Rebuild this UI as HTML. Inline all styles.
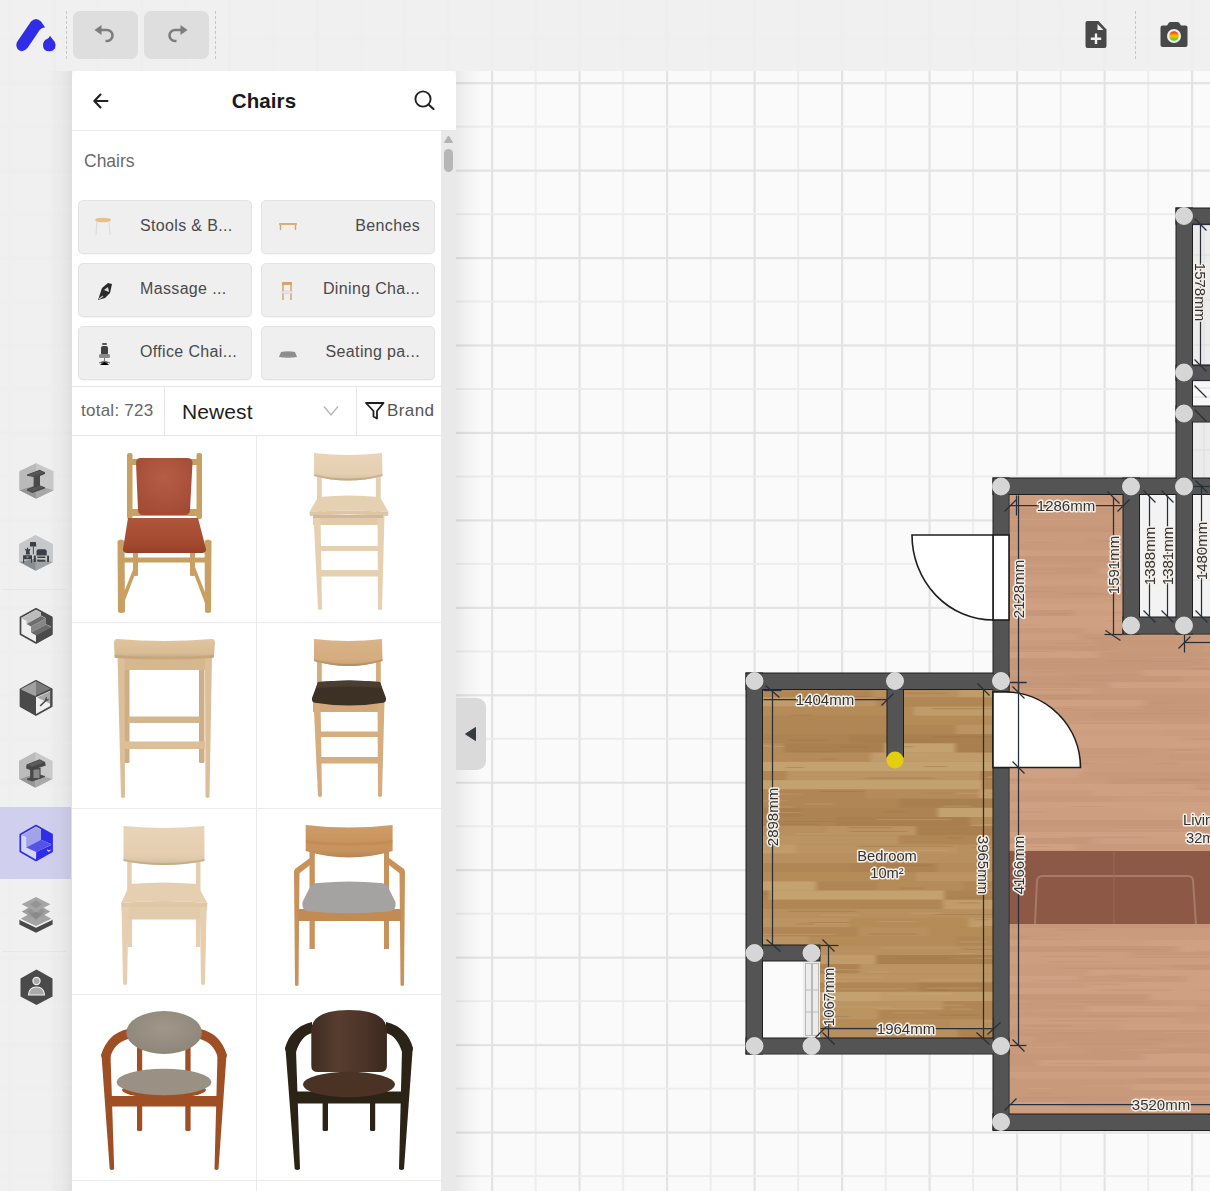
<!DOCTYPE html>
<html><head><meta charset="utf-8">
<style>
html,body{margin:0;padding:0;width:1210px;height:1191px;overflow:hidden;background:#fafafa;font-family:"Liberation Sans",sans-serif;}
.a{position:absolute}
#topbar{position:absolute;left:0;top:0;width:1210px;height:71px;background:rgba(238,238,238,0.88);backdrop-filter:blur(0.8px);}
.sep{position:absolute;top:11px;height:48px;width:0;border-left:1px dashed #c6c6c6;}
.ubtn{position:absolute;top:11px;width:65px;height:48px;background:#dedede;border-radius:7px;}
#sidebar{position:absolute;left:0;top:71px;width:72px;height:1120px;background:rgba(238,238,238,0.88);backdrop-filter:blur(1.5px);}
.sbi{position:absolute;left:0;width:71px;height:72px;}
.sbi svg{position:absolute;left:18px;top:17px;}
#panel{position:absolute;left:72px;top:71px;width:384px;height:1130px;background:#fff;border-radius:7px 7px 0 0;overflow:hidden;}
#hdr{position:absolute;left:0;top:0;width:384px;height:59px;border-bottom:1px solid #e8e8e8;}
#title{position:absolute;left:0;width:384px;top:18px;text-align:center;font-weight:bold;font-size:20.5px;letter-spacing:0.1px;color:#1a1a1a;}
#track{position:absolute;left:369px;top:60px;width:15px;height:1080px;background:#e9e9e9;}
#sub{position:absolute;left:12px;top:80px;font-size:17.5px;color:#6b6b6b;}
.cat{position:absolute;width:172px;height:52px;background:#efefef;border:1px solid #e3e3e3;border-radius:5px;box-shadow:0 1px 1px rgba(0,0,0,0.04);}
.cat .t{position:absolute;right:14px;top:16px;font-size:16px;letter-spacing:0.35px;color:#4a4a4a;white-space:nowrap;}
.cat svg{position:absolute;left:14px;top:15px;}
#sortbar{position:absolute;left:0;top:315px;width:369px;height:48px;border-top:1px solid #e6e6e6;border-bottom:1px solid #e6e6e6;}
.cell{position:absolute;width:184px;height:185px;border-right:1px solid #ebebeb;border-bottom:1px solid #ebebeb;}
.cell svg{position:absolute;left:0;top:0;}
#tab{position:absolute;left:456px;top:698px;width:30px;height:72px;background:#dadada;border-radius:0 9px 9px 0;}
.dim{font-family:"Liberation Sans",sans-serif;font-size:15px;fill:#333;paint-order:stroke;stroke:#f4efe8;stroke-width:3px;stroke-linejoin:round;}
</style></head><body>
<svg class="a" style="left:0;top:0" width="1210" height="1191" viewBox="0 0 1210 1191">
<rect x="9.65" y="0" width="2" height="1191" fill="#ededed"/>
<rect x="53.50" y="0" width="2.2" height="1191" fill="#e3e3e3"/>
<rect x="97.15" y="0" width="2" height="1191" fill="#ededed"/>
<rect x="141.00" y="0" width="2.2" height="1191" fill="#e3e3e3"/>
<rect x="184.65" y="0" width="2" height="1191" fill="#ededed"/>
<rect x="228.50" y="0" width="2.2" height="1191" fill="#e3e3e3"/>
<rect x="272.15" y="0" width="2" height="1191" fill="#ededed"/>
<rect x="316.00" y="0" width="2.2" height="1191" fill="#e3e3e3"/>
<rect x="359.65" y="0" width="2" height="1191" fill="#ededed"/>
<rect x="403.50" y="0" width="2.2" height="1191" fill="#e3e3e3"/>
<rect x="447.15" y="0" width="2" height="1191" fill="#ededed"/>
<rect x="491.00" y="0" width="2.2" height="1191" fill="#e3e3e3"/>
<rect x="534.65" y="0" width="2" height="1191" fill="#ededed"/>
<rect x="578.50" y="0" width="2.2" height="1191" fill="#e3e3e3"/>
<rect x="622.15" y="0" width="2" height="1191" fill="#ededed"/>
<rect x="666.00" y="0" width="2.2" height="1191" fill="#e3e3e3"/>
<rect x="709.65" y="0" width="2" height="1191" fill="#ededed"/>
<rect x="753.50" y="0" width="2.2" height="1191" fill="#e3e3e3"/>
<rect x="797.15" y="0" width="2" height="1191" fill="#ededed"/>
<rect x="841.00" y="0" width="2.2" height="1191" fill="#e3e3e3"/>
<rect x="884.65" y="0" width="2" height="1191" fill="#ededed"/>
<rect x="928.50" y="0" width="2.2" height="1191" fill="#e3e3e3"/>
<rect x="972.15" y="0" width="2" height="1191" fill="#ededed"/>
<rect x="1016.00" y="0" width="2.2" height="1191" fill="#e3e3e3"/>
<rect x="1059.65" y="0" width="2" height="1191" fill="#ededed"/>
<rect x="1103.50" y="0" width="2.2" height="1191" fill="#e3e3e3"/>
<rect x="1147.15" y="0" width="2" height="1191" fill="#ededed"/>
<rect x="1191.00" y="0" width="2.2" height="1191" fill="#e3e3e3"/>
<rect x="0" y="-5.40" width="1210" height="2.2" fill="#e3e3e3"/>
<rect x="0" y="38.23" width="1210" height="2" fill="#ededed"/>
<rect x="0" y="82.05" width="1210" height="2.2" fill="#e3e3e3"/>
<rect x="0" y="125.68" width="1210" height="2" fill="#ededed"/>
<rect x="0" y="169.50" width="1210" height="2.2" fill="#e3e3e3"/>
<rect x="0" y="213.13" width="1210" height="2" fill="#ededed"/>
<rect x="0" y="256.95" width="1210" height="2.2" fill="#e3e3e3"/>
<rect x="0" y="300.58" width="1210" height="2" fill="#ededed"/>
<rect x="0" y="344.40" width="1210" height="2.2" fill="#e3e3e3"/>
<rect x="0" y="388.03" width="1210" height="2" fill="#ededed"/>
<rect x="0" y="431.85" width="1210" height="2.2" fill="#e3e3e3"/>
<rect x="0" y="475.48" width="1210" height="2" fill="#ededed"/>
<rect x="0" y="519.30" width="1210" height="2.2" fill="#e3e3e3"/>
<rect x="0" y="562.93" width="1210" height="2" fill="#ededed"/>
<rect x="0" y="606.75" width="1210" height="2.2" fill="#e3e3e3"/>
<rect x="0" y="650.38" width="1210" height="2" fill="#ededed"/>
<rect x="0" y="694.20" width="1210" height="2.2" fill="#e3e3e3"/>
<rect x="0" y="737.83" width="1210" height="2" fill="#ededed"/>
<rect x="0" y="781.65" width="1210" height="2.2" fill="#e3e3e3"/>
<rect x="0" y="825.28" width="1210" height="2" fill="#ededed"/>
<rect x="0" y="869.10" width="1210" height="2.2" fill="#e3e3e3"/>
<rect x="0" y="912.73" width="1210" height="2" fill="#ededed"/>
<rect x="0" y="956.55" width="1210" height="2.2" fill="#e3e3e3"/>
<rect x="0" y="1000.18" width="1210" height="2" fill="#ededed"/>
<rect x="0" y="1044.00" width="1210" height="2.2" fill="#e3e3e3"/>
<rect x="0" y="1087.63" width="1210" height="2" fill="#ededed"/>
<rect x="0" y="1131.45" width="1210" height="2.2" fill="#e3e3e3"/>
<rect x="0" y="1175.08" width="1210" height="2" fill="#ededed"/><defs>
<filter id="wb" x="-5%" y="-5%" width="110%" height="110%"><feGaussianBlur stdDeviation="2 0.5"/></filter>
<filter id="wl" x="-5%" y="-5%" width="110%" height="110%"><feGaussianBlur stdDeviation="5 0.7"/></filter>
<clipPath id="cbed"><rect x="762" y="689" width="231" height="349"/></clipPath>
<clipPath id="cliv"><rect x="1008" y="494" width="202" height="620"/></clipPath>
</defs>
<g clip-path="url(#cbed)"><g filter="url(#wb)"><rect x="752" y="679" width="251" height="369" fill="#b48c5b"/>
<rect x="752" y="679.0" width="84" height="9.2" fill="#b58b59"/>
<rect x="782" y="683.7" width="25" height="1" fill="#c9a876" opacity="0.5"/>
<rect x="836" y="679.0" width="148" height="9.2" fill="#a97f4f"/>
<rect x="984" y="679.0" width="19" height="9.2" fill="#a97f4f"/>
<rect x="752" y="688.2" width="120" height="9.2" fill="#b08654"/>
<rect x="821" y="696.3" width="63" height="1" fill="#9e7546" opacity="0.5"/>
<rect x="812" y="693.7" width="20" height="1" fill="#9e7546" opacity="0.5"/>
<rect x="872" y="688.2" width="87" height="9.2" fill="#b8905e"/>
<rect x="896" y="689.4" width="38" height="1" fill="#9e7546" opacity="0.5"/>
<rect x="905" y="692.9" width="41" height="1" fill="#9e7546" opacity="0.5"/>
<rect x="959" y="688.2" width="44" height="9.2" fill="#c09c6a"/>
<rect x="985" y="696.4" width="38" height="1" fill="#c9a876" opacity="0.5"/>
<rect x="752" y="697.4" width="54" height="9.2" fill="#c09c6a"/>
<rect x="806" y="697.4" width="70" height="9.2" fill="#bb9463"/>
<rect x="819" y="699.2" width="18" height="1" fill="#9e7546" opacity="0.5"/>
<rect x="876" y="697.4" width="127" height="9.2" fill="#b08654"/>
<rect x="752" y="706.6" width="162" height="9.2" fill="#b58b59"/>
<rect x="791" y="714.7" width="22" height="1" fill="#9e7546" opacity="0.5"/>
<rect x="914" y="706.6" width="89" height="9.2" fill="#c09c6a"/>
<rect x="932" y="708.2" width="67" height="1" fill="#9e7546" opacity="0.5"/>
<rect x="752" y="715.8" width="143" height="9.2" fill="#b08654"/>
<rect x="895" y="715.8" width="108" height="9.2" fill="#b58b59"/>
<rect x="752" y="725.0" width="5" height="9.2" fill="#b8905e"/>
<rect x="753" y="731.5" width="16" height="1" fill="#c9a876" opacity="0.5"/>
<rect x="753" y="729.0" width="16" height="1" fill="#c9a876" opacity="0.5"/>
<rect x="757" y="725.0" width="200" height="9.2" fill="#b08654"/>
<rect x="956" y="725.0" width="47" height="9.2" fill="#bb9463"/>
<rect x="752" y="734.2" width="32" height="9.2" fill="#ad8352"/>
<rect x="753" y="738.0" width="19" height="1" fill="#9e7546" opacity="0.5"/>
<rect x="784" y="734.2" width="62" height="9.2" fill="#ad8352"/>
<rect x="789" y="739.7" width="37" height="1" fill="#9e7546" opacity="0.5"/>
<rect x="847" y="734.2" width="156" height="9.2" fill="#a97f4f"/>
<rect x="932" y="736.3" width="93" height="1" fill="#9e7546" opacity="0.5"/>
<rect x="862" y="740.4" width="75" height="1" fill="#9e7546" opacity="0.5"/>
<rect x="752" y="743.4" width="32" height="9.2" fill="#b58b59"/>
<rect x="753" y="745.0" width="17" height="1" fill="#c9a876" opacity="0.5"/>
<rect x="765" y="746.1" width="20" height="1" fill="#c9a876" opacity="0.5"/>
<rect x="784" y="743.4" width="101" height="9.2" fill="#a97f4f"/>
<rect x="792" y="751.4" width="45" height="1" fill="#9e7546" opacity="0.5"/>
<rect x="840" y="746.4" width="28" height="1" fill="#9e7546" opacity="0.5"/>
<rect x="885" y="743.4" width="70" height="9.2" fill="#c4a26f"/>
<rect x="887" y="746.2" width="27" height="1" fill="#9e7546" opacity="0.5"/>
<rect x="955" y="743.4" width="48" height="9.2" fill="#a97f4f"/>
<rect x="974" y="751.5" width="36" height="1" fill="#9e7546" opacity="0.5"/>
<rect x="752" y="752.6" width="119" height="9.2" fill="#b58b59"/>
<rect x="820" y="758.6" width="17" height="1" fill="#9e7546" opacity="0.5"/>
<rect x="871" y="752.6" width="128" height="9.2" fill="#c09c6a"/>
<rect x="876" y="754.6" width="50" height="1" fill="#c9a876" opacity="0.5"/>
<rect x="998" y="752.6" width="5" height="9.2" fill="#a97f4f"/>
<rect x="1000" y="756.1" width="19" height="1" fill="#c9a876" opacity="0.5"/>
<rect x="752" y="761.8" width="91" height="9.2" fill="#c4a26f"/>
<rect x="785" y="767.0" width="19" height="1" fill="#9e7546" opacity="0.5"/>
<rect x="843" y="761.8" width="160" height="9.2" fill="#c4a26f"/>
<rect x="933" y="765.2" width="82" height="1" fill="#c9a876" opacity="0.5"/>
<rect x="924" y="766.0" width="23" height="1" fill="#9e7546" opacity="0.5"/>
<rect x="752" y="771.0" width="35" height="9.2" fill="#b08654"/>
<rect x="787" y="771.0" width="194" height="9.2" fill="#bb9463"/>
<rect x="864" y="777.6" width="72" height="1" fill="#9e7546" opacity="0.5"/>
<rect x="981" y="771.0" width="22" height="9.2" fill="#a97f4f"/>
<rect x="988" y="776.4" width="26" height="1" fill="#c9a876" opacity="0.5"/>
<rect x="987" y="776.8" width="28" height="1" fill="#c9a876" opacity="0.5"/>
<rect x="752" y="780.2" width="47" height="9.2" fill="#c4a26f"/>
<rect x="799" y="780.2" width="183" height="9.2" fill="#c4a26f"/>
<rect x="982" y="780.2" width="21" height="9.2" fill="#ad8352"/>
<rect x="752" y="789.4" width="113" height="9.2" fill="#b08654"/>
<rect x="819" y="790.9" width="72" height="1" fill="#9e7546" opacity="0.5"/>
<rect x="771" y="793.6" width="30" height="1" fill="#c9a876" opacity="0.5"/>
<rect x="865" y="789.4" width="114" height="9.2" fill="#b58b59"/>
<rect x="922" y="792.7" width="83" height="1" fill="#c9a876" opacity="0.5"/>
<rect x="922" y="792.7" width="34" height="1" fill="#9e7546" opacity="0.5"/>
<rect x="979" y="789.4" width="24" height="9.2" fill="#c09c6a"/>
<rect x="988" y="793.0" width="24" height="1" fill="#9e7546" opacity="0.5"/>
<rect x="981" y="793.3" width="27" height="1" fill="#c9a876" opacity="0.5"/>
<rect x="752" y="798.6" width="51" height="9.2" fill="#b08654"/>
<rect x="755" y="800.4" width="32" height="1" fill="#c9a876" opacity="0.5"/>
<rect x="773" y="806.5" width="21" height="1" fill="#c9a876" opacity="0.5"/>
<rect x="803" y="798.6" width="96" height="9.2" fill="#b08654"/>
<rect x="805" y="803.5" width="28" height="1" fill="#c9a876" opacity="0.5"/>
<rect x="899" y="798.6" width="104" height="9.2" fill="#a97f4f"/>
<rect x="943" y="805.7" width="29" height="1" fill="#c9a876" opacity="0.5"/>
<rect x="752" y="807.8" width="49" height="9.2" fill="#a97f4f"/>
<rect x="770" y="812.1" width="43" height="1" fill="#c9a876" opacity="0.5"/>
<rect x="801" y="807.8" width="137" height="9.2" fill="#ad8352"/>
<rect x="882" y="811.2" width="23" height="1" fill="#9e7546" opacity="0.5"/>
<rect x="938" y="807.8" width="65" height="9.2" fill="#c4a26f"/>
<rect x="752" y="817.0" width="18" height="9.2" fill="#ad8352"/>
<rect x="761" y="824.6" width="19" height="1" fill="#9e7546" opacity="0.5"/>
<rect x="770" y="817.0" width="65" height="9.2" fill="#ad8352"/>
<rect x="781" y="821.0" width="52" height="1" fill="#9e7546" opacity="0.5"/>
<rect x="772" y="823.8" width="47" height="1" fill="#9e7546" opacity="0.5"/>
<rect x="835" y="817.0" width="135" height="9.2" fill="#a97f4f"/>
<rect x="877" y="819.1" width="74" height="1" fill="#c9a876" opacity="0.5"/>
<rect x="970" y="817.0" width="33" height="9.2" fill="#b58b59"/>
<rect x="971" y="824.8" width="20" height="1" fill="#c9a876" opacity="0.5"/>
<rect x="981" y="824.0" width="18" height="1" fill="#c9a876" opacity="0.5"/>
<rect x="752" y="826.2" width="76" height="9.2" fill="#b8905e"/>
<rect x="796" y="833.3" width="39" height="1" fill="#c9a876" opacity="0.5"/>
<rect x="828" y="826.2" width="88" height="9.2" fill="#bb9463"/>
<rect x="848" y="827.2" width="44" height="1" fill="#9e7546" opacity="0.5"/>
<rect x="849" y="830.9" width="58" height="1" fill="#9e7546" opacity="0.5"/>
<rect x="916" y="826.2" width="87" height="9.2" fill="#a97f4f"/>
<rect x="752" y="835.4" width="13" height="9.2" fill="#c4a26f"/>
<rect x="756" y="838.2" width="18" height="1" fill="#c9a876" opacity="0.5"/>
<rect x="765" y="835.4" width="133" height="9.2" fill="#bb9463"/>
<rect x="898" y="835.4" width="105" height="9.2" fill="#b08654"/>
<rect x="947" y="837.3" width="16" height="1" fill="#9e7546" opacity="0.5"/>
<rect x="752" y="844.6" width="43" height="9.2" fill="#c09c6a"/>
<rect x="758" y="850.8" width="28" height="1" fill="#c9a876" opacity="0.5"/>
<rect x="795" y="844.6" width="162" height="9.2" fill="#bb9463"/>
<rect x="865" y="850.1" width="84" height="1" fill="#c9a876" opacity="0.5"/>
<rect x="857" y="845.8" width="96" height="1" fill="#9e7546" opacity="0.5"/>
<rect x="957" y="844.6" width="46" height="9.2" fill="#b8905e"/>
<rect x="972" y="847.2" width="32" height="1" fill="#9e7546" opacity="0.5"/>
<rect x="978" y="847.3" width="38" height="1" fill="#9e7546" opacity="0.5"/>
<rect x="752" y="853.8" width="66" height="9.2" fill="#b8905e"/>
<rect x="818" y="853.8" width="169" height="9.2" fill="#b8905e"/>
<rect x="987" y="853.8" width="16" height="9.2" fill="#b8905e"/>
<rect x="752" y="863.0" width="9" height="9.2" fill="#bb9463"/>
<rect x="754" y="870.0" width="20" height="1" fill="#9e7546" opacity="0.5"/>
<rect x="761" y="863.0" width="88" height="9.2" fill="#b08654"/>
<rect x="849" y="863.0" width="88" height="9.2" fill="#ad8352"/>
<rect x="876" y="864.8" width="56" height="1" fill="#9e7546" opacity="0.5"/>
<rect x="937" y="863.0" width="66" height="9.2" fill="#b58b59"/>
<rect x="752" y="872.2" width="164" height="9.2" fill="#b58b59"/>
<rect x="916" y="872.2" width="87" height="9.2" fill="#bb9463"/>
<rect x="1002" y="872.2" width="1" height="9.2" fill="#a97f4f"/>
<rect x="1002" y="879.9" width="15" height="1" fill="#c9a876" opacity="0.5"/>
<rect x="752" y="881.4" width="64" height="9.2" fill="#c4a26f"/>
<rect x="766" y="885.5" width="23" height="1" fill="#c9a876" opacity="0.5"/>
<rect x="816" y="881.4" width="62" height="9.2" fill="#b08654"/>
<rect x="878" y="881.4" width="85" height="9.2" fill="#b58b59"/>
<rect x="899" y="887.7" width="25" height="1" fill="#9e7546" opacity="0.5"/>
<rect x="963" y="881.4" width="40" height="9.2" fill="#b08654"/>
<rect x="982" y="888.8" width="32" height="1" fill="#c9a876" opacity="0.5"/>
<rect x="752" y="890.6" width="18" height="9.2" fill="#ad8352"/>
<rect x="753" y="893.6" width="24" height="1" fill="#9e7546" opacity="0.5"/>
<rect x="770" y="890.6" width="174" height="9.2" fill="#c4a26f"/>
<rect x="944" y="890.6" width="59" height="9.2" fill="#ad8352"/>
<rect x="959" y="897.1" width="41" height="1" fill="#9e7546" opacity="0.5"/>
<rect x="752" y="899.8" width="7" height="9.2" fill="#bb9463"/>
<rect x="759" y="899.8" width="184" height="9.2" fill="#b08654"/>
<rect x="943" y="899.8" width="60" height="9.2" fill="#c09c6a"/>
<rect x="958" y="902.4" width="22" height="1" fill="#9e7546" opacity="0.5"/>
<rect x="752" y="909.0" width="153" height="9.2" fill="#b8905e"/>
<rect x="788" y="910.9" width="68" height="1" fill="#9e7546" opacity="0.5"/>
<rect x="820" y="914.4" width="39" height="1" fill="#c9a876" opacity="0.5"/>
<rect x="905" y="909.0" width="98" height="9.2" fill="#b8905e"/>
<rect x="911" y="912.7" width="30" height="1" fill="#c9a876" opacity="0.5"/>
<rect x="935" y="914.0" width="73" height="1" fill="#9e7546" opacity="0.5"/>
<rect x="752" y="918.2" width="97" height="9.2" fill="#bb9463"/>
<rect x="796" y="923.5" width="18" height="1" fill="#9e7546" opacity="0.5"/>
<rect x="808" y="922.0" width="66" height="1" fill="#9e7546" opacity="0.5"/>
<rect x="849" y="918.2" width="120" height="9.2" fill="#b58b59"/>
<rect x="878" y="921.2" width="38" height="1" fill="#c9a876" opacity="0.5"/>
<rect x="969" y="918.2" width="34" height="9.2" fill="#c09c6a"/>
<rect x="982" y="925.9" width="31" height="1" fill="#9e7546" opacity="0.5"/>
<rect x="974" y="919.3" width="16" height="1" fill="#9e7546" opacity="0.5"/>
<rect x="752" y="927.4" width="107" height="9.2" fill="#b08654"/>
<rect x="755" y="933.8" width="79" height="1" fill="#c9a876" opacity="0.5"/>
<rect x="859" y="927.4" width="70" height="9.2" fill="#b8905e"/>
<rect x="869" y="933.6" width="48" height="1" fill="#9e7546" opacity="0.5"/>
<rect x="929" y="927.4" width="74" height="9.2" fill="#b58b59"/>
<rect x="752" y="936.6" width="57" height="9.2" fill="#bb9463"/>
<rect x="809" y="936.6" width="147" height="9.2" fill="#b58b59"/>
<rect x="956" y="936.6" width="47" height="9.2" fill="#b08654"/>
<rect x="960" y="941.4" width="28" height="1" fill="#c9a876" opacity="0.5"/>
<rect x="752" y="945.8" width="42" height="9.2" fill="#c4a26f"/>
<rect x="765" y="952.4" width="41" height="1" fill="#c9a876" opacity="0.5"/>
<rect x="794" y="945.8" width="163" height="9.2" fill="#b8905e"/>
<rect x="881" y="947.6" width="92" height="1" fill="#c9a876" opacity="0.5"/>
<rect x="957" y="945.8" width="46" height="9.2" fill="#b8905e"/>
<rect x="963" y="948.8" width="42" height="1" fill="#9e7546" opacity="0.5"/>
<rect x="958" y="953.1" width="17" height="1" fill="#c9a876" opacity="0.5"/>
<rect x="752" y="955.0" width="33" height="9.2" fill="#b08654"/>
<rect x="785" y="955.0" width="91" height="9.2" fill="#c09c6a"/>
<rect x="876" y="955.0" width="127" height="9.2" fill="#a97f4f"/>
<rect x="951" y="957.7" width="52" height="1" fill="#c9a876" opacity="0.5"/>
<rect x="902" y="957.5" width="73" height="1" fill="#9e7546" opacity="0.5"/>
<rect x="752" y="964.2" width="26" height="9.2" fill="#b8905e"/>
<rect x="756" y="968.3" width="29" height="1" fill="#c9a876" opacity="0.5"/>
<rect x="778" y="964.2" width="81" height="9.2" fill="#ad8352"/>
<rect x="815" y="969.2" width="61" height="1" fill="#c9a876" opacity="0.5"/>
<rect x="860" y="964.2" width="143" height="9.2" fill="#bb9463"/>
<rect x="867" y="971.5" width="22" height="1" fill="#c9a876" opacity="0.5"/>
<rect x="752" y="973.4" width="27" height="9.2" fill="#b08654"/>
<rect x="779" y="973.4" width="103" height="9.2" fill="#bb9463"/>
<rect x="824" y="976.6" width="59" height="1" fill="#c9a876" opacity="0.5"/>
<rect x="793" y="980.7" width="56" height="1" fill="#c9a876" opacity="0.5"/>
<rect x="882" y="973.4" width="111" height="9.2" fill="#bb9463"/>
<rect x="920" y="979.5" width="77" height="1" fill="#c9a876" opacity="0.5"/>
<rect x="994" y="973.4" width="9" height="9.2" fill="#c09c6a"/>
<rect x="996" y="976.7" width="21" height="1" fill="#9e7546" opacity="0.5"/>
<rect x="752" y="982.6" width="166" height="9.2" fill="#b08654"/>
<rect x="810" y="988.5" width="95" height="1" fill="#c9a876" opacity="0.5"/>
<rect x="918" y="982.6" width="85" height="9.2" fill="#a97f4f"/>
<rect x="927" y="987.7" width="55" height="1" fill="#c9a876" opacity="0.5"/>
<rect x="929" y="989.4" width="18" height="1" fill="#9e7546" opacity="0.5"/>
<rect x="752" y="991.8" width="127" height="9.2" fill="#c4a26f"/>
<rect x="879" y="991.8" width="124" height="9.2" fill="#c09c6a"/>
<rect x="885" y="993.4" width="70" height="1" fill="#c9a876" opacity="0.5"/>
<rect x="926" y="993.4" width="26" height="1" fill="#c9a876" opacity="0.5"/>
<rect x="752" y="1001.0" width="61" height="9.2" fill="#ad8352"/>
<rect x="764" y="1004.8" width="52" height="1" fill="#9e7546" opacity="0.5"/>
<rect x="813" y="1001.0" width="129" height="9.2" fill="#bb9463"/>
<rect x="817" y="1006.5" width="74" height="1" fill="#c9a876" opacity="0.5"/>
<rect x="876" y="1008.1" width="80" height="1" fill="#c9a876" opacity="0.5"/>
<rect x="943" y="1001.0" width="60" height="9.2" fill="#b08654"/>
<rect x="943" y="1004.6" width="19" height="1" fill="#c9a876" opacity="0.5"/>
<rect x="951" y="1008.6" width="21" height="1" fill="#c9a876" opacity="0.5"/>
<rect x="752" y="1010.2" width="23" height="9.2" fill="#c4a26f"/>
<rect x="756" y="1015.0" width="28" height="1" fill="#c9a876" opacity="0.5"/>
<rect x="775" y="1010.2" width="103" height="9.2" fill="#bb9463"/>
<rect x="823" y="1015.9" width="26" height="1" fill="#9e7546" opacity="0.5"/>
<rect x="878" y="1010.2" width="125" height="9.2" fill="#b08654"/>
<rect x="938" y="1014.7" width="39" height="1" fill="#9e7546" opacity="0.5"/>
<rect x="894" y="1012.5" width="33" height="1" fill="#c9a876" opacity="0.5"/>
<rect x="752" y="1019.4" width="20" height="9.2" fill="#a97f4f"/>
<rect x="763" y="1023.3" width="27" height="1" fill="#c9a876" opacity="0.5"/>
<rect x="772" y="1019.4" width="179" height="9.2" fill="#b58b59"/>
<rect x="809" y="1027.0" width="74" height="1" fill="#9e7546" opacity="0.5"/>
<rect x="951" y="1019.4" width="52" height="9.2" fill="#b8905e"/>
<rect x="981" y="1020.8" width="41" height="1" fill="#c9a876" opacity="0.5"/>
<rect x="752" y="1028.6" width="54" height="9.2" fill="#c09c6a"/>
<rect x="806" y="1028.6" width="152" height="9.2" fill="#b8905e"/>
<rect x="958" y="1028.6" width="45" height="9.2" fill="#ad8352"/>
<rect x="977" y="1035.3" width="32" height="1" fill="#9e7546" opacity="0.5"/>
<rect x="752" y="1037.8" width="118" height="9.2" fill="#a97f4f"/>
<rect x="809" y="1045.3" width="24" height="1" fill="#c9a876" opacity="0.5"/>
<rect x="870" y="1037.8" width="132" height="9.2" fill="#b08654"/>
<rect x="1002" y="1037.8" width="1" height="9.2" fill="#a97f4f"/>
<rect x="752" y="1047.0" width="164" height="9.2" fill="#a97f4f"/>
<rect x="916" y="1047.0" width="72" height="9.2" fill="#c09c6a"/>
<rect x="920" y="1053.2" width="36" height="1" fill="#c9a876" opacity="0.5"/>
<rect x="948" y="1048.6" width="39" height="1" fill="#c9a876" opacity="0.5"/>
<rect x="987" y="1047.0" width="16" height="9.2" fill="#b8905e"/>
<rect x="994" y="1049.4" width="23" height="1" fill="#c9a876" opacity="0.5"/></g></g>
<g clip-path="url(#cliv)"><g filter="url(#wl)"><rect x="998" y="484" width="222" height="640" fill="#cb9c7d"/>
<rect x="998" y="484.0" width="139" height="6.0" fill="#ca9b7c"/>
<rect x="1137" y="484.0" width="83" height="6.0" fill="#cd9e80"/>
<rect x="1145" y="485.2" width="34" height="1" fill="#bf8f73" opacity="0.5"/>
<rect x="1142" y="486.5" width="28" height="1" fill="#bf8f73" opacity="0.5"/>
<rect x="998" y="490.0" width="64" height="6.0" fill="#cfa082"/>
<rect x="1062" y="490.0" width="158" height="6.0" fill="#c9997b"/>
<rect x="998" y="496.0" width="86" height="6.0" fill="#cd9e80"/>
<rect x="1084" y="496.0" width="136" height="6.0" fill="#c9997b"/>
<rect x="998" y="502.0" width="160" height="6.0" fill="#cd9e80"/>
<rect x="1158" y="502.0" width="62" height="6.0" fill="#cd9e80"/>
<rect x="1181" y="506.5" width="22" height="1" fill="#bf8f73" opacity="0.5"/>
<rect x="1191" y="506.9" width="26" height="1" fill="#d3a68a" opacity="0.5"/>
<rect x="998" y="508.0" width="199" height="6.0" fill="#c7977a"/>
<rect x="1197" y="508.0" width="23" height="6.0" fill="#ca9b7c"/>
<rect x="1206" y="509.0" width="20" height="1" fill="#d3a68a" opacity="0.5"/>
<rect x="1201" y="510.4" width="25" height="1" fill="#bf8f73" opacity="0.5"/>
<rect x="998" y="514.0" width="149" height="6.0" fill="#c9997b"/>
<rect x="1000" y="518.9" width="83" height="1" fill="#d3a68a" opacity="0.5"/>
<rect x="1147" y="514.0" width="73" height="6.0" fill="#cfa082"/>
<rect x="1184" y="516.5" width="35" height="1" fill="#bf8f73" opacity="0.5"/>
<rect x="998" y="520.0" width="177" height="6.0" fill="#c9997b"/>
<rect x="1175" y="520.0" width="45" height="6.0" fill="#cfa082"/>
<rect x="1199" y="523.0" width="22" height="1" fill="#d3a68a" opacity="0.5"/>
<rect x="998" y="526.0" width="202" height="6.0" fill="#c7977a"/>
<rect x="1112" y="527.1" width="26" height="1" fill="#d3a68a" opacity="0.5"/>
<rect x="1200" y="526.0" width="20" height="6.0" fill="#c7977a"/>
<rect x="998" y="532.0" width="206" height="6.0" fill="#ca9b7c"/>
<rect x="1204" y="532.0" width="16" height="6.0" fill="#c7977a"/>
<rect x="1204" y="533.7" width="17" height="1" fill="#d3a68a" opacity="0.5"/>
<rect x="998" y="538.0" width="84" height="6.0" fill="#ca9b7c"/>
<rect x="1000" y="542.7" width="53" height="1" fill="#d3a68a" opacity="0.5"/>
<rect x="1021" y="542.3" width="37" height="1" fill="#bf8f73" opacity="0.5"/>
<rect x="1082" y="538.0" width="138" height="6.0" fill="#c9997b"/>
<rect x="1099" y="540.3" width="97" height="1" fill="#bf8f73" opacity="0.5"/>
<rect x="998" y="544.0" width="146" height="6.0" fill="#c9997b"/>
<rect x="1144" y="544.0" width="76" height="6.0" fill="#cd9e80"/>
<rect x="998" y="550.0" width="32" height="6.0" fill="#cfa082"/>
<rect x="1017" y="554.4" width="24" height="1" fill="#d3a68a" opacity="0.5"/>
<rect x="1004" y="553.8" width="20" height="1" fill="#d3a68a" opacity="0.5"/>
<rect x="1030" y="550.0" width="153" height="6.0" fill="#cd9e80"/>
<rect x="1182" y="550.0" width="38" height="6.0" fill="#ca9b7c"/>
<rect x="998" y="556.0" width="95" height="6.0" fill="#c7977a"/>
<rect x="1093" y="556.0" width="96" height="6.0" fill="#c7977a"/>
<rect x="1143" y="560.1" width="36" height="1" fill="#d3a68a" opacity="0.5"/>
<rect x="1131" y="559.8" width="60" height="1" fill="#d3a68a" opacity="0.5"/>
<rect x="1189" y="556.0" width="31" height="6.0" fill="#c7977a"/>
<rect x="1207" y="558.1" width="29" height="1" fill="#d3a68a" opacity="0.5"/>
<rect x="998" y="562.0" width="107" height="6.0" fill="#c9997b"/>
<rect x="1014" y="565.2" width="59" height="1" fill="#d3a68a" opacity="0.5"/>
<rect x="1105" y="562.0" width="115" height="6.0" fill="#ca9b7c"/>
<rect x="1129" y="565.7" width="34" height="1" fill="#d3a68a" opacity="0.5"/>
<rect x="1162" y="566.0" width="40" height="1" fill="#bf8f73" opacity="0.5"/>
<rect x="998" y="568.0" width="100" height="6.0" fill="#c7977a"/>
<rect x="1030" y="571.1" width="25" height="1" fill="#d3a68a" opacity="0.5"/>
<rect x="1098" y="568.0" width="122" height="6.0" fill="#cfa082"/>
<rect x="1150" y="571.8" width="69" height="1" fill="#bf8f73" opacity="0.5"/>
<rect x="998" y="574.0" width="175" height="6.0" fill="#ca9b7c"/>
<rect x="1030" y="578.7" width="73" height="1" fill="#d3a68a" opacity="0.5"/>
<rect x="1001" y="577.9" width="32" height="1" fill="#d3a68a" opacity="0.5"/>
<rect x="1173" y="574.0" width="47" height="6.0" fill="#cd9e80"/>
<rect x="998" y="580.0" width="21" height="6.0" fill="#c9997b"/>
<rect x="1000" y="584.9" width="27" height="1" fill="#bf8f73" opacity="0.5"/>
<rect x="1019" y="580.0" width="137" height="6.0" fill="#cd9e80"/>
<rect x="1022" y="581.8" width="54" height="1" fill="#d3a68a" opacity="0.5"/>
<rect x="1157" y="580.0" width="63" height="6.0" fill="#c9997b"/>
<rect x="1184" y="581.8" width="30" height="1" fill="#d3a68a" opacity="0.5"/>
<rect x="1167" y="582.6" width="31" height="1" fill="#bf8f73" opacity="0.5"/>
<rect x="998" y="586.0" width="96" height="6.0" fill="#c9997b"/>
<rect x="1003" y="589.5" width="47" height="1" fill="#d3a68a" opacity="0.5"/>
<rect x="1015" y="590.8" width="36" height="1" fill="#bf8f73" opacity="0.5"/>
<rect x="1094" y="586.0" width="126" height="6.0" fill="#ca9b7c"/>
<rect x="1129" y="589.2" width="27" height="1" fill="#d3a68a" opacity="0.5"/>
<rect x="1166" y="589.3" width="89" height="1" fill="#bf8f73" opacity="0.5"/>
<rect x="998" y="592.0" width="199" height="6.0" fill="#c9997b"/>
<rect x="1065" y="593.4" width="89" height="1" fill="#bf8f73" opacity="0.5"/>
<rect x="1197" y="592.0" width="23" height="6.0" fill="#ca9b7c"/>
<rect x="1210" y="594.7" width="22" height="1" fill="#d3a68a" opacity="0.5"/>
<rect x="998" y="598.0" width="32" height="6.0" fill="#cd9e80"/>
<rect x="1012" y="601.4" width="21" height="1" fill="#d3a68a" opacity="0.5"/>
<rect x="1004" y="600.7" width="35" height="1" fill="#d3a68a" opacity="0.5"/>
<rect x="1030" y="598.0" width="190" height="6.0" fill="#cd9e80"/>
<rect x="1105" y="599.1" width="126" height="1" fill="#bf8f73" opacity="0.5"/>
<rect x="998" y="604.0" width="186" height="6.0" fill="#cfa082"/>
<rect x="1184" y="604.0" width="36" height="6.0" fill="#ca9b7c"/>
<rect x="1194" y="606.0" width="16" height="1" fill="#d3a68a" opacity="0.5"/>
<rect x="998" y="610.0" width="76" height="6.0" fill="#c7977a"/>
<rect x="1043" y="613.0" width="39" height="1" fill="#bf8f73" opacity="0.5"/>
<rect x="1074" y="610.0" width="83" height="6.0" fill="#cd9e80"/>
<rect x="1109" y="612.1" width="46" height="1" fill="#bf8f73" opacity="0.5"/>
<rect x="1157" y="610.0" width="63" height="6.0" fill="#c7977a"/>
<rect x="1179" y="614.0" width="16" height="1" fill="#d3a68a" opacity="0.5"/>
<rect x="1183" y="613.2" width="19" height="1" fill="#bf8f73" opacity="0.5"/>
<rect x="998" y="616.0" width="218" height="6.0" fill="#cfa082"/>
<rect x="1091" y="619.3" width="98" height="1" fill="#d3a68a" opacity="0.5"/>
<rect x="1108" y="620.4" width="78" height="1" fill="#bf8f73" opacity="0.5"/>
<rect x="1216" y="616.0" width="4" height="6.0" fill="#cfa082"/>
<rect x="998" y="622.0" width="44" height="6.0" fill="#cfa082"/>
<rect x="1019" y="624.1" width="40" height="1" fill="#bf8f73" opacity="0.5"/>
<rect x="1016" y="623.7" width="39" height="1" fill="#d3a68a" opacity="0.5"/>
<rect x="1042" y="622.0" width="177" height="6.0" fill="#cfa082"/>
<rect x="1047" y="625.2" width="93" height="1" fill="#d3a68a" opacity="0.5"/>
<rect x="1126" y="626.3" width="86" height="1" fill="#bf8f73" opacity="0.5"/>
<rect x="1219" y="622.0" width="1" height="6.0" fill="#cfa082"/>
<rect x="998" y="628.0" width="86" height="6.0" fill="#c9997b"/>
<rect x="1084" y="628.0" width="136" height="6.0" fill="#cd9e80"/>
<rect x="1162" y="631.6" width="74" height="1" fill="#bf8f73" opacity="0.5"/>
<rect x="1142" y="633.0" width="51" height="1" fill="#bf8f73" opacity="0.5"/>
<rect x="998" y="634.0" width="81" height="6.0" fill="#cd9e80"/>
<rect x="1079" y="634.0" width="141" height="6.0" fill="#c9997b"/>
<rect x="1111" y="635.4" width="21" height="1" fill="#bf8f73" opacity="0.5"/>
<rect x="1089" y="637.3" width="49" height="1" fill="#bf8f73" opacity="0.5"/>
<rect x="998" y="640.0" width="95" height="6.0" fill="#ca9b7c"/>
<rect x="1052" y="643.0" width="37" height="1" fill="#bf8f73" opacity="0.5"/>
<rect x="1093" y="640.0" width="105" height="6.0" fill="#c7977a"/>
<rect x="1198" y="640.0" width="22" height="6.0" fill="#ca9b7c"/>
<rect x="1205" y="644.6" width="24" height="1" fill="#d3a68a" opacity="0.5"/>
<rect x="998" y="646.0" width="115" height="6.0" fill="#c7977a"/>
<rect x="1054" y="650.9" width="75" height="1" fill="#d3a68a" opacity="0.5"/>
<rect x="1010" y="649.9" width="65" height="1" fill="#d3a68a" opacity="0.5"/>
<rect x="1113" y="646.0" width="95" height="6.0" fill="#c9997b"/>
<rect x="1208" y="646.0" width="12" height="6.0" fill="#ca9b7c"/>
<rect x="1211" y="648.8" width="19" height="1" fill="#d3a68a" opacity="0.5"/>
<rect x="1212" y="647.4" width="19" height="1" fill="#d3a68a" opacity="0.5"/>
<rect x="998" y="652.0" width="101" height="6.0" fill="#cfa082"/>
<rect x="1043" y="656.2" width="20" height="1" fill="#d3a68a" opacity="0.5"/>
<rect x="1006" y="656.3" width="53" height="1" fill="#d3a68a" opacity="0.5"/>
<rect x="1099" y="652.0" width="121" height="6.0" fill="#c7977a"/>
<rect x="1150" y="656.7" width="74" height="1" fill="#d3a68a" opacity="0.5"/>
<rect x="998" y="658.0" width="213" height="6.0" fill="#c7977a"/>
<rect x="1107" y="660.7" width="82" height="1" fill="#bf8f73" opacity="0.5"/>
<rect x="1049" y="662.0" width="28" height="1" fill="#bf8f73" opacity="0.5"/>
<rect x="1211" y="658.0" width="9" height="6.0" fill="#cd9e80"/>
<rect x="998" y="664.0" width="190" height="6.0" fill="#c7977a"/>
<rect x="1188" y="664.0" width="32" height="6.0" fill="#c7977a"/>
<rect x="1194" y="668.7" width="24" height="1" fill="#bf8f73" opacity="0.5"/>
<rect x="1191" y="665.6" width="23" height="1" fill="#d3a68a" opacity="0.5"/>
<rect x="998" y="670.0" width="60" height="6.0" fill="#ca9b7c"/>
<rect x="1028" y="671.4" width="43" height="1" fill="#bf8f73" opacity="0.5"/>
<rect x="1058" y="670.0" width="86" height="6.0" fill="#c9997b"/>
<rect x="1077" y="674.7" width="64" height="1" fill="#bf8f73" opacity="0.5"/>
<rect x="1144" y="670.0" width="76" height="6.0" fill="#cfa082"/>
<rect x="998" y="676.0" width="186" height="6.0" fill="#c7977a"/>
<rect x="1079" y="679.7" width="33" height="1" fill="#bf8f73" opacity="0.5"/>
<rect x="1184" y="676.0" width="36" height="6.0" fill="#ca9b7c"/>
<rect x="998" y="682.0" width="112" height="6.0" fill="#c7977a"/>
<rect x="1030" y="684.2" width="34" height="1" fill="#d3a68a" opacity="0.5"/>
<rect x="1014" y="683.7" width="61" height="1" fill="#bf8f73" opacity="0.5"/>
<rect x="1110" y="682.0" width="110" height="6.0" fill="#cfa082"/>
<rect x="1111" y="686.9" width="19" height="1" fill="#d3a68a" opacity="0.5"/>
<rect x="1113" y="683.7" width="71" height="1" fill="#d3a68a" opacity="0.5"/>
<rect x="998" y="688.0" width="96" height="6.0" fill="#cd9e80"/>
<rect x="1025" y="689.4" width="55" height="1" fill="#bf8f73" opacity="0.5"/>
<rect x="1094" y="688.0" width="126" height="6.0" fill="#c9997b"/>
<rect x="998" y="694.0" width="123" height="6.0" fill="#c7977a"/>
<rect x="1001" y="695.2" width="87" height="1" fill="#bf8f73" opacity="0.5"/>
<rect x="1045" y="697.8" width="29" height="1" fill="#bf8f73" opacity="0.5"/>
<rect x="1121" y="694.0" width="95" height="6.0" fill="#c7977a"/>
<rect x="1216" y="694.0" width="4" height="6.0" fill="#cd9e80"/>
<rect x="1218" y="695.3" width="17" height="1" fill="#d3a68a" opacity="0.5"/>
<rect x="1217" y="697.2" width="17" height="1" fill="#d3a68a" opacity="0.5"/>
<rect x="998" y="700.0" width="41" height="6.0" fill="#c9997b"/>
<rect x="1020" y="703.8" width="41" height="1" fill="#bf8f73" opacity="0.5"/>
<rect x="1039" y="700.0" width="105" height="6.0" fill="#cfa082"/>
<rect x="1144" y="700.0" width="76" height="6.0" fill="#c7977a"/>
<rect x="1150" y="702.3" width="19" height="1" fill="#bf8f73" opacity="0.5"/>
<rect x="998" y="706.0" width="140" height="6.0" fill="#ca9b7c"/>
<rect x="1003" y="708.0" width="75" height="1" fill="#bf8f73" opacity="0.5"/>
<rect x="1065" y="709.8" width="90" height="1" fill="#bf8f73" opacity="0.5"/>
<rect x="1138" y="706.0" width="82" height="6.0" fill="#c7977a"/>
<rect x="1165" y="710.0" width="60" height="1" fill="#bf8f73" opacity="0.5"/>
<rect x="998" y="712.0" width="91" height="6.0" fill="#c9997b"/>
<rect x="1021" y="713.2" width="21" height="1" fill="#d3a68a" opacity="0.5"/>
<rect x="1015" y="715.2" width="32" height="1" fill="#bf8f73" opacity="0.5"/>
<rect x="1089" y="712.0" width="127" height="6.0" fill="#c7977a"/>
<rect x="1130" y="713.1" width="72" height="1" fill="#bf8f73" opacity="0.5"/>
<rect x="1216" y="712.0" width="4" height="6.0" fill="#c9997b"/>
<rect x="998" y="718.0" width="59" height="6.0" fill="#c7977a"/>
<rect x="1017" y="719.1" width="20" height="1" fill="#bf8f73" opacity="0.5"/>
<rect x="998" y="720.3" width="36" height="1" fill="#bf8f73" opacity="0.5"/>
<rect x="1057" y="718.0" width="163" height="6.0" fill="#c9997b"/>
<rect x="1074" y="721.1" width="85" height="1" fill="#d3a68a" opacity="0.5"/>
<rect x="998" y="724.0" width="66" height="6.0" fill="#cfa082"/>
<rect x="1064" y="724.0" width="140" height="6.0" fill="#cfa082"/>
<rect x="1204" y="724.0" width="16" height="6.0" fill="#cfa082"/>
<rect x="998" y="730.0" width="165" height="6.0" fill="#cd9e80"/>
<rect x="1047" y="732.9" width="15" height="1" fill="#bf8f73" opacity="0.5"/>
<rect x="1040" y="734.3" width="20" height="1" fill="#bf8f73" opacity="0.5"/>
<rect x="1163" y="730.0" width="57" height="6.0" fill="#ca9b7c"/>
<rect x="998" y="736.0" width="181" height="6.0" fill="#cfa082"/>
<rect x="1028" y="737.9" width="37" height="1" fill="#d3a68a" opacity="0.5"/>
<rect x="1179" y="736.0" width="41" height="6.0" fill="#cd9e80"/>
<rect x="1185" y="738.4" width="40" height="1" fill="#bf8f73" opacity="0.5"/>
<rect x="998" y="742.0" width="78" height="6.0" fill="#cd9e80"/>
<rect x="1076" y="742.0" width="144" height="6.0" fill="#cfa082"/>
<rect x="1091" y="743.2" width="24" height="1" fill="#d3a68a" opacity="0.5"/>
<rect x="998" y="748.0" width="8" height="6.0" fill="#c7977a"/>
<rect x="1002" y="751.7" width="19" height="1" fill="#bf8f73" opacity="0.5"/>
<rect x="1006" y="748.0" width="148" height="6.0" fill="#c9997b"/>
<rect x="1154" y="748.0" width="66" height="6.0" fill="#ca9b7c"/>
<rect x="1169" y="749.7" width="28" height="1" fill="#bf8f73" opacity="0.5"/>
<rect x="1174" y="751.4" width="35" height="1" fill="#d3a68a" opacity="0.5"/>
<rect x="998" y="754.0" width="168" height="6.0" fill="#ca9b7c"/>
<rect x="1004" y="757.2" width="30" height="1" fill="#d3a68a" opacity="0.5"/>
<rect x="1058" y="756.5" width="84" height="1" fill="#bf8f73" opacity="0.5"/>
<rect x="1166" y="754.0" width="54" height="6.0" fill="#c9997b"/>
<rect x="998" y="760.0" width="134" height="6.0" fill="#ca9b7c"/>
<rect x="1076" y="762.7" width="16" height="1" fill="#bf8f73" opacity="0.5"/>
<rect x="1058" y="761.3" width="69" height="1" fill="#d3a68a" opacity="0.5"/>
<rect x="1132" y="760.0" width="88" height="6.0" fill="#ca9b7c"/>
<rect x="1157" y="763.2" width="20" height="1" fill="#bf8f73" opacity="0.5"/>
<rect x="1183" y="762.0" width="44" height="1" fill="#d3a68a" opacity="0.5"/>
<rect x="998" y="766.0" width="85" height="6.0" fill="#cfa082"/>
<rect x="1083" y="766.0" width="137" height="6.0" fill="#ca9b7c"/>
<rect x="998" y="772.0" width="81" height="6.0" fill="#cfa082"/>
<rect x="1032" y="773.4" width="43" height="1" fill="#d3a68a" opacity="0.5"/>
<rect x="1079" y="772.0" width="125" height="6.0" fill="#c9997b"/>
<rect x="1204" y="772.0" width="16" height="6.0" fill="#c7977a"/>
<rect x="1213" y="773.3" width="16" height="1" fill="#d3a68a" opacity="0.5"/>
<rect x="1206" y="776.1" width="16" height="1" fill="#d3a68a" opacity="0.5"/>
<rect x="998" y="778.0" width="107" height="6.0" fill="#ca9b7c"/>
<rect x="1017" y="782.6" width="33" height="1" fill="#d3a68a" opacity="0.5"/>
<rect x="1000" y="779.7" width="23" height="1" fill="#bf8f73" opacity="0.5"/>
<rect x="1105" y="778.0" width="115" height="6.0" fill="#c7977a"/>
<rect x="1159" y="779.4" width="38" height="1" fill="#bf8f73" opacity="0.5"/>
<rect x="1138" y="779.2" width="74" height="1" fill="#bf8f73" opacity="0.5"/>
<rect x="998" y="784.0" width="195" height="6.0" fill="#cfa082"/>
<rect x="1193" y="784.0" width="27" height="6.0" fill="#ca9b7c"/>
<rect x="1193" y="788.4" width="27" height="1" fill="#bf8f73" opacity="0.5"/>
<rect x="998" y="790.0" width="96" height="6.0" fill="#ca9b7c"/>
<rect x="1094" y="790.0" width="126" height="6.0" fill="#cfa082"/>
<rect x="1152" y="792.3" width="29" height="1" fill="#bf8f73" opacity="0.5"/>
<rect x="1156" y="792.5" width="30" height="1" fill="#d3a68a" opacity="0.5"/>
<rect x="998" y="796.0" width="118" height="6.0" fill="#c9997b"/>
<rect x="1116" y="796.0" width="104" height="6.0" fill="#ca9b7c"/>
<rect x="1123" y="798.5" width="53" height="1" fill="#d3a68a" opacity="0.5"/>
<rect x="998" y="802.0" width="65" height="6.0" fill="#cfa082"/>
<rect x="1001" y="806.8" width="45" height="1" fill="#d3a68a" opacity="0.5"/>
<rect x="1063" y="802.0" width="83" height="6.0" fill="#cfa082"/>
<rect x="1072" y="806.0" width="32" height="1" fill="#bf8f73" opacity="0.5"/>
<rect x="1146" y="802.0" width="74" height="6.0" fill="#cfa082"/>
<rect x="1181" y="805.8" width="41" height="1" fill="#d3a68a" opacity="0.5"/>
<rect x="1188" y="804.6" width="18" height="1" fill="#d3a68a" opacity="0.5"/>
<rect x="998" y="808.0" width="150" height="6.0" fill="#cd9e80"/>
<rect x="1005" y="811.7" width="40" height="1" fill="#bf8f73" opacity="0.5"/>
<rect x="1148" y="808.0" width="72" height="6.0" fill="#cfa082"/>
<rect x="998" y="814.0" width="85" height="6.0" fill="#cd9e80"/>
<rect x="1083" y="814.0" width="137" height="6.0" fill="#cd9e80"/>
<rect x="998" y="820.0" width="217" height="6.0" fill="#c7977a"/>
<rect x="1215" y="820.0" width="5" height="6.0" fill="#ca9b7c"/>
<rect x="1218" y="824.8" width="15" height="1" fill="#bf8f73" opacity="0.5"/>
<rect x="998" y="826.0" width="201" height="6.0" fill="#c9997b"/>
<rect x="1114" y="829.1" width="88" height="1" fill="#d3a68a" opacity="0.5"/>
<rect x="1199" y="826.0" width="21" height="6.0" fill="#c9997b"/>
<rect x="998" y="832.0" width="173" height="6.0" fill="#cfa082"/>
<rect x="1067" y="836.8" width="80" height="1" fill="#bf8f73" opacity="0.5"/>
<rect x="1042" y="833.9" width="91" height="1" fill="#d3a68a" opacity="0.5"/>
<rect x="1171" y="832.0" width="49" height="6.0" fill="#cfa082"/>
<rect x="998" y="838.0" width="96" height="6.0" fill="#c7977a"/>
<rect x="1094" y="838.0" width="126" height="6.0" fill="#cd9e80"/>
<rect x="1100" y="842.3" width="43" height="1" fill="#d3a68a" opacity="0.5"/>
<rect x="998" y="844.0" width="78" height="6.0" fill="#cfa082"/>
<rect x="1029" y="846.1" width="21" height="1" fill="#bf8f73" opacity="0.5"/>
<rect x="1076" y="844.0" width="144" height="6.0" fill="#c9997b"/>
<rect x="998" y="850.0" width="4" height="6.0" fill="#cfa082"/>
<rect x="1002" y="850.0" width="115" height="6.0" fill="#c9997b"/>
<rect x="1068" y="854.3" width="57" height="1" fill="#bf8f73" opacity="0.5"/>
<rect x="1007" y="852.9" width="41" height="1" fill="#bf8f73" opacity="0.5"/>
<rect x="1117" y="850.0" width="83" height="6.0" fill="#cfa082"/>
<rect x="1200" y="850.0" width="20" height="6.0" fill="#c7977a"/>
<rect x="1202" y="854.1" width="22" height="1" fill="#bf8f73" opacity="0.5"/>
<rect x="998" y="856.0" width="65" height="6.0" fill="#cfa082"/>
<rect x="1033" y="858.2" width="37" height="1" fill="#d3a68a" opacity="0.5"/>
<rect x="1063" y="856.0" width="157" height="6.0" fill="#cd9e80"/>
<rect x="1065" y="857.6" width="16" height="1" fill="#d3a68a" opacity="0.5"/>
<rect x="1108" y="857.5" width="82" height="1" fill="#bf8f73" opacity="0.5"/>
<rect x="998" y="862.0" width="116" height="6.0" fill="#cd9e80"/>
<rect x="1014" y="865.9" width="37" height="1" fill="#bf8f73" opacity="0.5"/>
<rect x="1025" y="863.2" width="39" height="1" fill="#bf8f73" opacity="0.5"/>
<rect x="1114" y="862.0" width="106" height="6.0" fill="#cfa082"/>
<rect x="1122" y="863.4" width="73" height="1" fill="#d3a68a" opacity="0.5"/>
<rect x="998" y="868.0" width="163" height="6.0" fill="#cfa082"/>
<rect x="1014" y="870.2" width="107" height="1" fill="#bf8f73" opacity="0.5"/>
<rect x="1161" y="868.0" width="59" height="6.0" fill="#c9997b"/>
<rect x="1183" y="869.8" width="19" height="1" fill="#d3a68a" opacity="0.5"/>
<rect x="1174" y="872.3" width="30" height="1" fill="#d3a68a" opacity="0.5"/>
<rect x="998" y="874.0" width="127" height="6.0" fill="#ca9b7c"/>
<rect x="1033" y="875.8" width="20" height="1" fill="#bf8f73" opacity="0.5"/>
<rect x="1065" y="875.5" width="44" height="1" fill="#d3a68a" opacity="0.5"/>
<rect x="1125" y="874.0" width="95" height="6.0" fill="#c7977a"/>
<rect x="1167" y="878.1" width="30" height="1" fill="#bf8f73" opacity="0.5"/>
<rect x="998" y="880.0" width="75" height="6.0" fill="#cd9e80"/>
<rect x="1037" y="882.1" width="35" height="1" fill="#bf8f73" opacity="0.5"/>
<rect x="1023" y="883.4" width="56" height="1" fill="#d3a68a" opacity="0.5"/>
<rect x="1073" y="880.0" width="147" height="6.0" fill="#c9997b"/>
<rect x="1146" y="881.2" width="59" height="1" fill="#bf8f73" opacity="0.5"/>
<rect x="998" y="886.0" width="151" height="6.0" fill="#cfa082"/>
<rect x="1038" y="889.1" width="68" height="1" fill="#bf8f73" opacity="0.5"/>
<rect x="1063" y="889.8" width="69" height="1" fill="#bf8f73" opacity="0.5"/>
<rect x="1149" y="886.0" width="71" height="6.0" fill="#cfa082"/>
<rect x="1187" y="889.6" width="46" height="1" fill="#bf8f73" opacity="0.5"/>
<rect x="998" y="892.0" width="88" height="6.0" fill="#c7977a"/>
<rect x="1086" y="892.0" width="134" height="6.0" fill="#c7977a"/>
<rect x="1110" y="894.8" width="87" height="1" fill="#d3a68a" opacity="0.5"/>
<rect x="998" y="898.0" width="180" height="6.0" fill="#cfa082"/>
<rect x="1021" y="899.6" width="44" height="1" fill="#bf8f73" opacity="0.5"/>
<rect x="1178" y="898.0" width="42" height="6.0" fill="#cd9e80"/>
<rect x="1194" y="903.0" width="26" height="1" fill="#d3a68a" opacity="0.5"/>
<rect x="998" y="904.0" width="84" height="6.0" fill="#cfa082"/>
<rect x="1082" y="904.0" width="138" height="6.0" fill="#cfa082"/>
<rect x="1083" y="906.4" width="51" height="1" fill="#d3a68a" opacity="0.5"/>
<rect x="1161" y="907.0" width="33" height="1" fill="#bf8f73" opacity="0.5"/>
<rect x="998" y="910.0" width="76" height="6.0" fill="#c7977a"/>
<rect x="1003" y="912.2" width="27" height="1" fill="#d3a68a" opacity="0.5"/>
<rect x="1074" y="910.0" width="146" height="6.0" fill="#ca9b7c"/>
<rect x="1136" y="912.9" width="23" height="1" fill="#bf8f73" opacity="0.5"/>
<rect x="998" y="916.0" width="17" height="6.0" fill="#c9997b"/>
<rect x="1015" y="916.0" width="205" height="6.0" fill="#c7977a"/>
<rect x="1111" y="917.7" width="82" height="1" fill="#bf8f73" opacity="0.5"/>
<rect x="1104" y="919.5" width="47" height="1" fill="#d3a68a" opacity="0.5"/>
<rect x="998" y="922.0" width="136" height="6.0" fill="#c7977a"/>
<rect x="1134" y="922.0" width="86" height="6.0" fill="#c7977a"/>
<rect x="1155" y="927.0" width="18" height="1" fill="#bf8f73" opacity="0.5"/>
<rect x="998" y="928.0" width="222" height="6.0" fill="#ca9b7c"/>
<rect x="1053" y="929.4" width="45" height="1" fill="#bf8f73" opacity="0.5"/>
<rect x="998" y="934.0" width="65" height="6.0" fill="#c9997b"/>
<rect x="1034" y="937.0" width="53" height="1" fill="#d3a68a" opacity="0.5"/>
<rect x="1005" y="936.5" width="25" height="1" fill="#bf8f73" opacity="0.5"/>
<rect x="1063" y="934.0" width="95" height="6.0" fill="#ca9b7c"/>
<rect x="1078" y="936.7" width="47" height="1" fill="#d3a68a" opacity="0.5"/>
<rect x="1158" y="934.0" width="62" height="6.0" fill="#ca9b7c"/>
<rect x="998" y="940.0" width="148" height="6.0" fill="#cd9e80"/>
<rect x="1061" y="944.5" width="21" height="1" fill="#d3a68a" opacity="0.5"/>
<rect x="1146" y="940.0" width="74" height="6.0" fill="#cfa082"/>
<rect x="1187" y="942.8" width="41" height="1" fill="#d3a68a" opacity="0.5"/>
<rect x="998" y="946.0" width="180" height="6.0" fill="#c7977a"/>
<rect x="1080" y="948.9" width="81" height="1" fill="#bf8f73" opacity="0.5"/>
<rect x="1178" y="946.0" width="42" height="6.0" fill="#cfa082"/>
<rect x="1197" y="950.8" width="27" height="1" fill="#bf8f73" opacity="0.5"/>
<rect x="1182" y="947.5" width="17" height="1" fill="#d3a68a" opacity="0.5"/>
<rect x="998" y="952.0" width="133" height="6.0" fill="#cd9e80"/>
<rect x="1022" y="954.9" width="86" height="1" fill="#d3a68a" opacity="0.5"/>
<rect x="1041" y="955.8" width="60" height="1" fill="#bf8f73" opacity="0.5"/>
<rect x="1131" y="952.0" width="89" height="6.0" fill="#c7977a"/>
<rect x="1165" y="955.4" width="42" height="1" fill="#d3a68a" opacity="0.5"/>
<rect x="1134" y="955.4" width="31" height="1" fill="#d3a68a" opacity="0.5"/>
<rect x="998" y="958.0" width="111" height="6.0" fill="#cd9e80"/>
<rect x="1049" y="961.6" width="64" height="1" fill="#bf8f73" opacity="0.5"/>
<rect x="1109" y="958.0" width="111" height="6.0" fill="#cd9e80"/>
<rect x="1137" y="962.9" width="34" height="1" fill="#d3a68a" opacity="0.5"/>
<rect x="998" y="964.0" width="171" height="6.0" fill="#ca9b7c"/>
<rect x="1061" y="967.8" width="97" height="1" fill="#bf8f73" opacity="0.5"/>
<rect x="1169" y="964.0" width="51" height="6.0" fill="#c9997b"/>
<rect x="1193" y="968.2" width="41" height="1" fill="#bf8f73" opacity="0.5"/>
<rect x="1169" y="965.9" width="46" height="1" fill="#bf8f73" opacity="0.5"/>
<rect x="998" y="970.0" width="90" height="6.0" fill="#ca9b7c"/>
<rect x="1088" y="970.0" width="132" height="6.0" fill="#cfa082"/>
<rect x="1121" y="971.4" width="84" height="1" fill="#d3a68a" opacity="0.5"/>
<rect x="1105" y="974.7" width="34" height="1" fill="#bf8f73" opacity="0.5"/>
<rect x="998" y="976.0" width="81" height="6.0" fill="#cfa082"/>
<rect x="1034" y="978.2" width="34" height="1" fill="#d3a68a" opacity="0.5"/>
<rect x="1034" y="980.1" width="59" height="1" fill="#bf8f73" opacity="0.5"/>
<rect x="1079" y="976.0" width="107" height="6.0" fill="#c9997b"/>
<rect x="1128" y="977.1" width="22" height="1" fill="#d3a68a" opacity="0.5"/>
<rect x="1186" y="976.0" width="34" height="6.0" fill="#cfa082"/>
<rect x="1188" y="978.2" width="31" height="1" fill="#d3a68a" opacity="0.5"/>
<rect x="998" y="982.0" width="90" height="6.0" fill="#ca9b7c"/>
<rect x="1088" y="982.0" width="84" height="6.0" fill="#cfa082"/>
<rect x="1092" y="983.8" width="32" height="1" fill="#bf8f73" opacity="0.5"/>
<rect x="1133" y="985.1" width="24" height="1" fill="#d3a68a" opacity="0.5"/>
<rect x="1172" y="982.0" width="48" height="6.0" fill="#cfa082"/>
<rect x="998" y="988.0" width="175" height="6.0" fill="#cfa082"/>
<rect x="1098" y="989.7" width="110" height="1" fill="#bf8f73" opacity="0.5"/>
<rect x="1173" y="988.0" width="47" height="6.0" fill="#cfa082"/>
<rect x="1200" y="989.6" width="23" height="1" fill="#bf8f73" opacity="0.5"/>
<rect x="998" y="994.0" width="152" height="6.0" fill="#c7977a"/>
<rect x="1150" y="994.0" width="70" height="6.0" fill="#cfa082"/>
<rect x="1188" y="998.3" width="39" height="1" fill="#d3a68a" opacity="0.5"/>
<rect x="998" y="1000.0" width="29" height="6.0" fill="#ca9b7c"/>
<rect x="1013" y="1003.9" width="16" height="1" fill="#bf8f73" opacity="0.5"/>
<rect x="1027" y="1000.0" width="146" height="6.0" fill="#c9997b"/>
<rect x="1058" y="1003.4" width="28" height="1" fill="#d3a68a" opacity="0.5"/>
<rect x="1074" y="1001.7" width="77" height="1" fill="#bf8f73" opacity="0.5"/>
<rect x="1172" y="1000.0" width="48" height="6.0" fill="#ca9b7c"/>
<rect x="1196" y="1004.8" width="25" height="1" fill="#bf8f73" opacity="0.5"/>
<rect x="998" y="1006.0" width="88" height="6.0" fill="#c9997b"/>
<rect x="1038" y="1009.4" width="41" height="1" fill="#d3a68a" opacity="0.5"/>
<rect x="1015" y="1010.5" width="67" height="1" fill="#d3a68a" opacity="0.5"/>
<rect x="1086" y="1006.0" width="111" height="6.0" fill="#cfa082"/>
<rect x="1140" y="1008.8" width="30" height="1" fill="#d3a68a" opacity="0.5"/>
<rect x="1120" y="1007.4" width="67" height="1" fill="#d3a68a" opacity="0.5"/>
<rect x="1196" y="1006.0" width="24" height="6.0" fill="#ca9b7c"/>
<rect x="1207" y="1007.4" width="21" height="1" fill="#d3a68a" opacity="0.5"/>
<rect x="998" y="1012.0" width="176" height="6.0" fill="#c9997b"/>
<rect x="1081" y="1015.5" width="114" height="1" fill="#bf8f73" opacity="0.5"/>
<rect x="1174" y="1012.0" width="46" height="6.0" fill="#c9997b"/>
<rect x="998" y="1018.0" width="180" height="6.0" fill="#cd9e80"/>
<rect x="1044" y="1020.2" width="82" height="1" fill="#bf8f73" opacity="0.5"/>
<rect x="1178" y="1018.0" width="42" height="6.0" fill="#ca9b7c"/>
<rect x="998" y="1024.0" width="124" height="6.0" fill="#ca9b7c"/>
<rect x="1026" y="1025.3" width="46" height="1" fill="#bf8f73" opacity="0.5"/>
<rect x="1122" y="1024.0" width="98" height="6.0" fill="#cfa082"/>
<rect x="998" y="1030.0" width="118" height="6.0" fill="#c7977a"/>
<rect x="1021" y="1031.4" width="75" height="1" fill="#d3a68a" opacity="0.5"/>
<rect x="1047" y="1032.3" width="48" height="1" fill="#bf8f73" opacity="0.5"/>
<rect x="1116" y="1030.0" width="104" height="6.0" fill="#c7977a"/>
<rect x="1167" y="1032.1" width="47" height="1" fill="#d3a68a" opacity="0.5"/>
<rect x="998" y="1036.0" width="35" height="6.0" fill="#ca9b7c"/>
<rect x="1007" y="1040.5" width="19" height="1" fill="#d3a68a" opacity="0.5"/>
<rect x="1001" y="1040.7" width="16" height="1" fill="#d3a68a" opacity="0.5"/>
<rect x="1033" y="1036.0" width="187" height="6.0" fill="#c7977a"/>
<rect x="1139" y="1038.7" width="27" height="1" fill="#bf8f73" opacity="0.5"/>
<rect x="998" y="1042.0" width="159" height="6.0" fill="#c9997b"/>
<rect x="1070" y="1043.4" width="102" height="1" fill="#bf8f73" opacity="0.5"/>
<rect x="1026" y="1046.7" width="43" height="1" fill="#d3a68a" opacity="0.5"/>
<rect x="1157" y="1042.0" width="63" height="6.0" fill="#c9997b"/>
<rect x="1163" y="1044.8" width="28" height="1" fill="#d3a68a" opacity="0.5"/>
<rect x="998" y="1048.0" width="90" height="6.0" fill="#c9997b"/>
<rect x="1088" y="1048.0" width="132" height="6.0" fill="#c7977a"/>
<rect x="1123" y="1049.4" width="37" height="1" fill="#d3a68a" opacity="0.5"/>
<rect x="1163" y="1052.8" width="46" height="1" fill="#d3a68a" opacity="0.5"/>
<rect x="998" y="1054.0" width="146" height="6.0" fill="#c7977a"/>
<rect x="1144" y="1054.0" width="76" height="6.0" fill="#cfa082"/>
<rect x="998" y="1060.0" width="41" height="6.0" fill="#c7977a"/>
<rect x="1039" y="1060.0" width="181" height="6.0" fill="#cfa082"/>
<rect x="1051" y="1063.1" width="57" height="1" fill="#bf8f73" opacity="0.5"/>
<rect x="1110" y="1064.3" width="42" height="1" fill="#d3a68a" opacity="0.5"/>
<rect x="998" y="1066.0" width="95" height="6.0" fill="#c9997b"/>
<rect x="1093" y="1066.0" width="127" height="6.0" fill="#c7977a"/>
<rect x="998" y="1072.0" width="149" height="6.0" fill="#cd9e80"/>
<rect x="1147" y="1072.0" width="73" height="6.0" fill="#cfa082"/>
<rect x="998" y="1078.0" width="142" height="6.0" fill="#c9997b"/>
<rect x="1140" y="1078.0" width="80" height="6.0" fill="#c7977a"/>
<rect x="1162" y="1079.9" width="17" height="1" fill="#bf8f73" opacity="0.5"/>
<rect x="998" y="1084.0" width="8" height="6.0" fill="#c7977a"/>
<rect x="1006" y="1084.0" width="125" height="6.0" fill="#c9997b"/>
<rect x="1081" y="1085.4" width="71" height="1" fill="#d3a68a" opacity="0.5"/>
<rect x="1026" y="1088.1" width="28" height="1" fill="#d3a68a" opacity="0.5"/>
<rect x="1131" y="1084.0" width="89" height="6.0" fill="#cfa082"/>
<rect x="998" y="1090.0" width="222" height="6.0" fill="#c9997b"/>
<rect x="1029" y="1092.9" width="22" height="1" fill="#bf8f73" opacity="0.5"/>
<rect x="998" y="1096.0" width="137" height="6.0" fill="#c7977a"/>
<rect x="1019" y="1097.1" width="53" height="1" fill="#bf8f73" opacity="0.5"/>
<rect x="1135" y="1096.0" width="85" height="6.0" fill="#cd9e80"/>
<rect x="1184" y="1098.5" width="40" height="1" fill="#bf8f73" opacity="0.5"/>
<rect x="998" y="1102.0" width="67" height="6.0" fill="#cfa082"/>
<rect x="1023" y="1104.3" width="50" height="1" fill="#d3a68a" opacity="0.5"/>
<rect x="1065" y="1102.0" width="155" height="6.0" fill="#c9997b"/>
<rect x="1086" y="1105.3" width="16" height="1" fill="#d3a68a" opacity="0.5"/>
<rect x="1087" y="1103.4" width="51" height="1" fill="#bf8f73" opacity="0.5"/>
<rect x="998" y="1108.0" width="178" height="6.0" fill="#cd9e80"/>
<rect x="1176" y="1108.0" width="44" height="6.0" fill="#ca9b7c"/>
<rect x="1195" y="1111.8" width="28" height="1" fill="#d3a68a" opacity="0.5"/>
<rect x="1194" y="1111.5" width="17" height="1" fill="#bf8f73" opacity="0.5"/>
<rect x="998" y="1114.0" width="153" height="6.0" fill="#c9997b"/>
<rect x="1030" y="1118.0" width="59" height="1" fill="#bf8f73" opacity="0.5"/>
<rect x="1049" y="1116.2" width="71" height="1" fill="#d3a68a" opacity="0.5"/>
<rect x="1151" y="1114.0" width="69" height="6.0" fill="#cfa082"/>
<rect x="1165" y="1117.4" width="23" height="1" fill="#bf8f73" opacity="0.5"/>
<rect x="1176" y="1118.0" width="51" height="1" fill="#d3a68a" opacity="0.5"/>
<rect x="998" y="1120.0" width="157" height="6.0" fill="#cd9e80"/>
<rect x="1024" y="1123.9" width="94" height="1" fill="#d3a68a" opacity="0.5"/>
<rect x="1155" y="1120.0" width="65" height="6.0" fill="#c7977a"/>
<rect x="1179" y="1123.8" width="16" height="1" fill="#bf8f73" opacity="0.5"/></g></g><!-- sofa -->
<rect x="1008" y="851" width="202" height="73" fill="#8d5946"/>
<path d="M1035 924 L1037 880 Q1038 876 1043 876 L1188 876 Q1193 876 1193 881 L1196 924" fill="none" stroke="#a67a68" stroke-width="2"/>
<line x1="1114" y1="851" x2="1114" y2="924" stroke="#9a6855" stroke-width="1"/>
<!-- closet interiors -->
<rect x="1139" y="494" width="38" height="124" fill="#f3f3f3"/>
<rect x="1192" y="224" width="18" height="142" fill="#ececec"/>
<rect x="1192" y="380" width="18" height="27" fill="#f7f7f7"/>
<rect x="1192" y="421" width="18" height="58" fill="#ececec"/>
<rect x="1192" y="494" width="18" height="124" fill="#f2f2f2"/>
<g stroke="#dcdcdc" stroke-width="1">
<line x1="1204" y1="224" x2="1204" y2="366"/><line x1="1192" y1="255" x2="1210" y2="255"/><line x1="1192" y1="300" x2="1210" y2="300"/><line x1="1192" y1="345" x2="1210" y2="345"/>
<line x1="1192" y1="388" x2="1210" y2="388"/><line x1="1192" y1="397" x2="1210" y2="397"/>
<line x1="1204" y1="421" x2="1204" y2="479"/><line x1="1192" y1="450" x2="1210" y2="450"/>
<line x1="1192" y1="530" x2="1210" y2="530"/><line x1="1192" y1="580" x2="1210" y2="580"/>
</g>
<rect x="762" y="961" width="42" height="77" fill="#fbfbfb"/>
<rect x="803" y="961" width="17" height="77" fill="#ececec"/>
<g stroke="#b9b9b9" stroke-width="1" fill="none">
<rect x="805.5" y="963.5" width="6" height="72"/><rect x="812.5" y="963.5" width="6" height="72"/>
<line x1="805" y1="990" x2="819" y2="990"/><line x1="805" y1="1012" x2="819" y2="1012"/>
</g>
<!-- walls -->
<g fill="#545454" stroke="#1e1e1e" stroke-width="1">
<rect x="746" y="673" width="263" height="16.5"/>
<rect x="746" y="673" width="16.5" height="381"/>
<rect x="746" y="1038" width="263" height="16"/>
<rect x="762" y="945" width="58" height="16"/>
<rect x="887" y="689" width="16.5" height="68"/>
<rect x="993" y="478" width="16" height="652"/>
<rect x="993" y="478" width="217" height="16.5"/>
<rect x="993" y="1114" width="217" height="16.5"/>
<rect x="1123" y="478" width="16.5" height="156"/>
<rect x="1123" y="617" width="87" height="17"/>
<rect x="1176" y="208" width="16.5" height="426"/>
<rect x="1176" y="208" width="34" height="16"/>
<rect x="1176" y="365" width="34" height="15.5"/>
<rect x="1176" y="406" width="34" height="16"/>
</g>
<g fill="#545454">
<rect x="747" y="674" width="15" height="379"/>
<rect x="747" y="674" width="261" height="15"/>
<rect x="747" y="1039" width="261" height="14.5"/>
<rect x="994" y="479" width="14.5" height="651"/>
<rect x="994" y="479" width="216" height="15"/>
<rect x="994" y="1115" width="216" height="15"/>
<rect x="1124" y="479" width="15" height="154"/>
<rect x="1124" y="618" width="86" height="15.5"/>
<rect x="1177" y="209" width="15" height="424"/>
<rect x="1177" y="209" width="33" height="14.5"/>
<rect x="1177" y="366" width="33" height="14"/>
<rect x="1177" y="407" width="33" height="14.5"/>
</g>
<!-- doors -->
<g fill="#fff" stroke="#1e1e1e" stroke-width="1.6">
<rect x="993" y="535" width="16" height="85"/>
<path d="M993 535 L912 535 A81 85 0 0 0 993 620 Z"/>
<rect x="993" y="692" width="16" height="75.5"/>
<path d="M993 767.5 L1080.5 767.5 A76 76 0 0 0 1004 692 L993 692 Z"/>
</g>
<!-- dimension lines -->
<g stroke="#27303a" stroke-width="1.25" fill="none" transform="translate(0.5,0.5)">
<line x1="763" y1="699" x2="887" y2="699"/><line x1="765" y1="685" x2="779" y2="697"/><line x1="763" y1="690" x2="781" y2="690"/><line x1="881" y1="705" x2="893" y2="693"/>
<line x1="772" y1="689" x2="772" y2="945"/><line x1="766" y1="939" x2="780" y2="951"/><line x1="762" y1="945" x2="781" y2="945"/>
<line x1="983" y1="689" x2="983" y2="1038"/><line x1="977" y1="683" x2="989" y2="695"/><line x1="976" y1="1032" x2="989" y2="1044"/>
<line x1="820" y1="1028" x2="993" y2="1028"/><line x1="815" y1="1037" x2="827" y2="1025"/><line x1="987" y1="1034" x2="1000" y2="1022"/><line x1="993" y1="1017" x2="993" y2="1040"/>
<line x1="828" y1="945" x2="828" y2="1038"/><line x1="820" y1="945" x2="838" y2="945"/><line x1="822" y1="939" x2="834" y2="951"/><line x1="822" y1="1032" x2="834" y2="1044"/>
<line x1="1009" y1="505" x2="1123" y2="505"/><line x1="1004" y1="511" x2="1016" y2="499"/><line x1="1117" y1="511" x2="1129" y2="499"/><line x1="1016" y1="495" x2="1016" y2="515"/>
<line x1="1018" y1="495" x2="1018" y2="692"/><line x1="1012" y1="686" x2="1024" y2="698"/><line x1="1008" y1="682" x2="1026" y2="682"/>
<line x1="1113" y1="497" x2="1113" y2="634"/><line x1="1107" y1="491" x2="1119" y2="503"/><line x1="1105" y1="630" x2="1120" y2="640"/><line x1="1104" y1="634" x2="1122" y2="634"/>
<line x1="1149" y1="495" x2="1149" y2="617"/><line x1="1143" y1="490" x2="1155" y2="502"/><line x1="1143" y1="610" x2="1155" y2="622"/>
<line x1="1167" y1="495" x2="1167" y2="617"/><line x1="1161" y1="490" x2="1173" y2="502"/><line x1="1161" y1="610" x2="1173" y2="622"/>
<line x1="1201" y1="484" x2="1201" y2="617"/><line x1="1195" y1="480" x2="1207" y2="492"/><line x1="1195" y1="610" x2="1207" y2="622"/><line x1="1192" y1="486" x2="1210" y2="486"/>
<line x1="1200" y1="224" x2="1200" y2="365"/><line x1="1194" y1="218" x2="1206" y2="230"/><line x1="1194" y1="359" x2="1206" y2="371"/><line x1="1192" y1="224" x2="1210" y2="224"/><line x1="1192" y1="365" x2="1210" y2="365"/>
<line x1="1018" y1="682" x2="1018" y2="1045"/><line x1="1012" y1="761" x2="1024" y2="773"/><line x1="1012" y1="1039" x2="1024" y2="1051"/><line x1="1008" y1="1045" x2="1026" y2="1045"/><line x1="1008" y1="682" x2="1026" y2="682"/>
<line x1="1009" y1="1104" x2="1210" y2="1104"/><line x1="1004" y1="1110" x2="1016" y2="1098"/>
<line x1="1184" y1="642" x2="1210" y2="642"/><line x1="1178" y1="648" x2="1190" y2="636"/><line x1="1184" y1="634" x2="1184" y2="652"/>
<line x1="1192" y1="380" x2="1210" y2="380"/><line x1="1194" y1="385" x2="1206" y2="397"/><line x1="1194" y1="409" x2="1206" y2="421"/>
</g>
<!-- nodes -->
<g fill="#d6d6d6" stroke="#e6e6e6" stroke-width="0.8">
<circle cx="754.5" cy="681" r="8.5"/><circle cx="895" cy="681" r="8.5"/><circle cx="1001" cy="681" r="8.5"/>
<circle cx="754.5" cy="953" r="8.5"/><circle cx="811.5" cy="953" r="8.5"/>
<circle cx="754.5" cy="1046" r="8.5"/><circle cx="811.5" cy="1046" r="8.5"/><circle cx="1001" cy="1046" r="8.5"/>
<circle cx="1001" cy="1122" r="8.5"/><circle cx="1001" cy="486.5" r="8.5"/><circle cx="1131" cy="486.5" r="8.5"/><circle cx="1184" cy="486.5" r="8.5"/>
<circle cx="1131" cy="625.5" r="8.5"/><circle cx="1184" cy="625.5" r="8.5"/><circle cx="1184" cy="216" r="8.5"/><circle cx="1184" cy="372.5" r="8.5"/><circle cx="1184" cy="413.5" r="8.5"/>
</g>
<circle cx="895" cy="760" r="8.5" fill="#e3cf10"/>
<!-- labels -->
<g class="dim">
<text x="825" y="704.5" text-anchor="middle">1404mm</text>
<text x="906" y="1033.5" text-anchor="middle">1964mm</text>
<text x="1066" y="510.5" text-anchor="middle">1286mm</text>
<text x="1161" y="1109.5" text-anchor="middle">3520mm</text>
<text transform="translate(777.5,817) rotate(-90)" text-anchor="middle">2898mm</text>
<text transform="translate(977.5,865) rotate(90)" text-anchor="middle">3965mm</text>
<text transform="translate(833.5,997) rotate(-90)" text-anchor="middle">1067mm</text>
<text transform="translate(1023.5,589) rotate(-90)" text-anchor="middle">2128mm</text>
<text transform="translate(1118.5,565) rotate(-90)" text-anchor="middle">1591mm</text>
<text transform="translate(1154.5,556) rotate(-90)" text-anchor="middle">1388mm</text>
<text transform="translate(1172.5,556) rotate(-90)" text-anchor="middle">1381mm</text>
<text transform="translate(1206.5,551) rotate(-90)" text-anchor="middle">1480mm</text>
<text transform="translate(1194.5,292) rotate(90)" text-anchor="middle">1578mm</text>
<text transform="translate(1023.5,865) rotate(-90)" text-anchor="middle">4166mm</text>
<text x="887" y="861" text-anchor="middle" style="font-size:14.7px">Bedroom</text>
<text x="887" y="878" text-anchor="middle" style="font-size:14.7px">10m²</text>
<text x="1183" y="825" style="font-size:14.7px">Living</text>
<text x="1186" y="843" style="font-size:14.7px">32m²</text>
</g>
</svg>
<div id="topbar">
<svg class="a" style="left:14px;top:16px" width="44" height="38" viewBox="14 16 44 38">
<path d="M17 42 L31 21.5 Q36 16.5 41 21.5 L45.2 27.6 Q42 27 39.7 30 L27.5 48 Q23 53 18.5 50 Q15 46.5 17 42 Z" fill="#2f2de6"/>
<path d="M49.9 35.7 L54.8 42 Q56.5 45.5 55 48.5 Q53 51.3 49.3 51.3 Q43 51.3 43 45 Q43 40.5 47.5 38.8 Q49.5 37.8 49.9 35.7 Z" fill="#2f2de6"/>
</svg>
<div class="sep" style="left:66px"></div>
<div class="ubtn" style="left:73px">
<svg class="a" style="left:0;top:0" width="65" height="48" viewBox="0 0 65 48"><path d="M27 19 H34 A5.5 5.5 0 0 1 34 30 H32.5" fill="none" stroke="#7d7d7d" stroke-width="2.6"/><path d="M21.5 19 L28.5 14 V24 Z" fill="#7d7d7d"/></svg>
</div>
<div class="ubtn" style="left:144px">
<svg class="a" style="left:0;top:0" width="65" height="48" viewBox="0 0 65 48"><path d="M38 19 H31 A5.5 5.5 0 0 0 31 30 H32.5" fill="none" stroke="#7d7d7d" stroke-width="2.6"/><path d="M43.5 19 L36.5 14 V24 Z" fill="#7d7d7d"/></svg>
</div>
<div class="sep" style="left:215px"></div>
<svg class="a" style="left:1085px;top:21px" width="24" height="28" viewBox="0 0 24 28">
<path d="M2.5 0 H13.5 L21.5 8.5 V25 Q21.5 27 19.5 27 H2.5 Q0.5 27 0.5 25 V2 Q0.5 0 2.5 0 Z" fill="#484848"/>
<path d="M12.5 3 V9 H18.5 Z" fill="#f0f0f0"/>
<path d="M11 12.5 V23 M5.8 17.7 H16.2" stroke="#f0f0f0" stroke-width="2.4"/>
</svg>
<div class="sep" style="left:1135px"></div>
<svg class="a" style="left:1160px;top:21px" width="30" height="28" viewBox="0 0 30 28">
<defs><linearGradient id="cg" x1="0" y1="0" x2="0" y2="1"><stop offset="0" stop-color="#f02a1a"/><stop offset="0.5" stop-color="#f5c400"/><stop offset="1" stop-color="#2bd62b"/></linearGradient></defs>
<path d="M9 1.5 Q9.5 1 10.5 1 H17.5 Q18.5 1 19 1.5 L21 4.5 H25.5 Q27.5 4.5 27.5 6.5 V24 Q27.5 26 25.5 26 H2.5 Q0.5 26 0.5 24 V6.5 Q0.5 4.5 2.5 4.5 H7 Z" fill="#484848"/>
<circle cx="14" cy="15" r="7" fill="#f0f0f0"/>
<circle cx="14" cy="15" r="4.8" fill="url(#cg)"/>
</svg>
</div>
<div id="sidebar">
<div class="a" style="left:0;top:736px;width:71px;height:72px;background:#d0d0ee"></div>
<div class="a" style="left:2px;top:518px;width:64px;height:1px;background:#e6e6e6"></div>
<div class="a" style="left:2px;top:880px;width:64px;height:1px;background:#e6e6e6"></div>
<div class="a" style="left:46px;top:0;width:26px;height:1120px;background:linear-gradient(90deg,rgba(0,0,0,0),rgba(0,0,0,0.025) 60%,rgba(0,0,0,0.07))"></div>
<!-- icon 1 -->
<svg class="a" style="left:19px;top:392px" width="36" height="37" viewBox="0 0 36 37">
<path d="M17.2 0.2 L34.6 8.3 V27.3 L17.2 35.7 L0.4 27.3 V8.3 Z" fill="#c8c8c8"/>
<path d="M17.2 0.2 L0.4 8.3 V27.3 L17.2 22 Z" fill="#bababa"/>
<path d="M0.4 27.3 L17.2 22 V35.7 Z" fill="#959595"/>
<path d="M17.2 22 L34.6 27.3 L17.2 35.7 Z" fill="#a7a7a7"/>
<path d="M8 11.5 L20.7 6.8 L26 9.2 V11 L21 13 V22.5 L26 24.2 V25.5 L13.3 30 L8 27.6 V26 L14.6 23.6 V14 L8 12.8 Z" fill="#4a4a4a"/>
<path d="M9.5 11.8 L20.7 7.8 L24.5 9.5 L13.3 13.5 Z M9.5 26.5 L20.7 22.8 L24.5 24.3 L13.3 28.3 Z" fill="#575757"/>
</svg>
<!-- icon 2 -->
<svg class="a" style="left:19px;top:464px" width="35" height="37" viewBox="0 0 35 37">
<path d="M16.5 0.1 L34 9 V27 L16.5 35.7 L0 27 V9 Z" fill="#c7c8ca"/>
<path d="M0.5 27 L16.8 23.5 V35.7 Z" fill="#8a8d90"/>
<path d="M16.8 23.5 L34 27 L16.8 35.7 Z" fill="#a0a3a6"/>
<path d="M11.1 7.1 H16.8 L17.4 11.4 H10.9 Z" fill="#3a3e45"/>
<rect x="13.9" y="11.4" width="0.9" height="8" fill="#3a3e45"/>
<path d="M8.5 12 L9.5 14.5 L11.5 13.5 L10.5 16.5 L11 19.5 H6.8 L7.2 16.5 L5.5 13.5 L7.5 14.5 Z" fill="#3a3e45"/>
<path d="M4.1 20.2 H13 V27.8 H12 V24.3 H5.1 V27.8 H4.1 Z" fill="#3a3e45"/>
<rect x="7.5" y="21.5" width="2" height="1" fill="#c7c8ca"/>
<path d="M17.5 16.5 Q17.5 14.3 19.5 14.3 H25.5 Q27.7 14.3 27.7 16.5 V20.4 H17.5 Z" fill="#3a3e45"/>
<rect x="14.8" y="20.6" width="2" height="6.4" rx="0.5" fill="#3a3e45"/><rect x="28.1" y="20.6" width="1.9" height="6.4" rx="0.5" fill="#3a3e45"/>
<rect x="18.3" y="21.5" width="8" height="1.5" fill="#3a3e45"/><rect x="18.3" y="24.7" width="8" height="2" fill="#3a3e45"/>
</svg>
<!-- icon 3 stairs -->
<svg class="a" style="left:19px;top:537px" width="35" height="37" viewBox="0 0 35 37">
<path d="M17 0.8 L32.7 9.3 V26.3 L17 35 L1.5 26.3 V9.3 Z" fill="#efefef" stroke="#474747" stroke-width="1.7" stroke-linejoin="round"/>
<path d="M17 0.5 L33.4 9.2 V26.5 L17 35.6 V27 L32.5 18.8 L27 16.2 V10.2 L22 7.5 V3 Z" fill="#4a4a4a"/>
<path d="M2.2 10 L17 2 L22 4.6 V8 L7.6 16 V13 Z" fill="#bcbcbc"/>
<path d="M7.6 16 L22 8 L27 10.5 L12 18.5 Z" fill="#6e6e6e"/>
<path d="M12 18.5 L27 10.5 V16.5 L12 24.5 Z" fill="#868686"/>
<path d="M12 24.5 L27 16.5 L32.5 19.2 L17 27.5 Z" fill="#6a6a6a"/>
</svg>
<!-- icon 4 cube wrench -->
<svg class="a" style="left:19px;top:609px" width="35" height="37" viewBox="0 0 35 37">
<path d="M17 0.8 L32.7 9.3 V26.3 L17 35 L1.5 26.3 V9.3 Z" fill="#f0f0f0" stroke="#474747" stroke-width="1.7" stroke-linejoin="round"/>
<path d="M1.5 9.3 L17 1.2 V16.3 Z" fill="#a0a0a0"/>
<path d="M17 1.2 L32.5 9.3 L17 16.3 Z" fill="#7a7a7a"/>
<path d="M1 9 L17 16.3 V35.5 L1 26.5 Z" fill="#4a4a4a"/>
<path d="M17 16.3 L33 9 " stroke="#474747" stroke-width="1.7"/>
<path d="M18 17.5 L31.8 11 V24 Z" fill="#a8a8a8"/>
<path d="M31.8 10 V26" stroke="#474747" stroke-width="1.2"/>
<path d="M21.2 26 L27 20.3" stroke="#474747" stroke-width="1.6"/>
<path d="M26 19.5 Q26 17.3 28.2 16.7 L27.5 18.8 L29 19.5 L30.3 18.3 Q30 20.8 27.5 21 Z" fill="#474747"/>
</svg>
<!-- icon 5 column -->
<svg class="a" style="left:19px;top:681px" width="35" height="37" viewBox="0 0 35 37">
<path d="M16.3 0.1 L33.6 9 V26.9 L16.3 35.7 L0 26.9 V9 Z" fill="#c9c9c9"/>
<path d="M16.3 0.1 L0 9 V26.9 L16.3 22 Z" fill="#bcbcbc"/>
<path d="M0.5 26.9 L16.3 22 V35.7 Z" fill="#969696"/>
<path d="M16.3 22 L33.2 26.9 L16.3 35.7 Z" fill="#a9a9a9"/>
<path d="M8 26.5 L20.5 22.5 L26 24 V25 L13 29.6 L8 27.8 Z" fill="#4a4a4a"/>
<rect x="11.1" y="16" width="10.5" height="11" fill="#4a4a4a"/>
<rect x="14.5" y="17.5" width="6" height="8.5" fill="#8a8a8a"/>
<path d="M7.5 12.5 L20.7 7.3 L26 10 L26.8 13.4 L12.5 18.5 L7.2 16.5 Z" fill="#474747"/>
<path d="M8.5 12.6 L20.7 8 L24.8 10.2 L12.8 15 Z" fill="#5c5c5c"/>
</svg>
<!-- icon 6 active -->
<svg class="a" style="left:19px;top:753px" width="35" height="38" viewBox="0 0 35 38">
<path d="M17 1.5 L33 10.5 V27.5 L17 36.5 L1.3 27.5 V10.5 Z" fill="#d6d6f3" stroke="#2f2de6" stroke-width="1.7" stroke-linejoin="round"/>
<path d="M17 1.3 L33.2 10.5 V20.5 L22 15.7 V4 Z" fill="#2f2de6"/>
<path d="M2.5 11.3 L17 3.2 L22 6 V15.7 L7.2 23.6 V13 Z" fill="#a2a2ea"/>
<path d="M7.2 23.6 L22 15.7 L32.6 20.5 L17.2 28 Z" fill="#5353ea"/>
<path d="M17.2 28 L33.2 20.5 V27.5 L17 36.6 Z" fill="#2f2de6"/>
<path d="M28.2 26 Q29.5 28.5 31.5 26.2 Q30 27.5 28.2 26 Z" fill="#e0e0f6" stroke="#e0e0f6" stroke-width="0.8"/>
</svg>
<!-- icon 7 layers -->
<svg class="a" style="left:18px;top:826px" width="37" height="37" viewBox="0 0 37 37">
<path d="M1.4 22.1 L18 30 L34.6 22.1 V27.4 L18 35.7 L1.4 27.4 Z" fill="#484848"/>
<path d="M2.5 21.8 L18 13.5 L33.5 21.8 L18 29.5 Z" fill="#a4a4a4"/>
<path d="M3.8 14.5 L18 6.5 L32.2 14.5 L18 22.8 Z" fill="#9c9c9c"/>
<path d="M9.3 14.5 L18 6.2 L26.7 14.5 L18 22.6 Z" fill="#8a8a8a"/>
<path d="M6 13.3 L30 15.7 M6 15.7 L30 13.3 M10 12 L26 17 M10 17 L26 12" stroke="#b4b4b4" stroke-width="0.5" opacity="0.6"/>
<path d="M3.6 7.3 L18 0 L32.4 7.3 L18 14.7 Z" fill="#a5a5a5"/>
<path d="M12 7.3 L18 3.5 L24 7.3 L18 11.5 Z" fill="#949494"/>
<path d="M1.4 22.1 L18 30 L34.6 22.1" fill="none" stroke="#f2f2f2" stroke-width="1.4"/>
</svg>
<!-- icon 8 person -->
<svg class="a" style="left:19px;top:898px" width="35" height="37" viewBox="0 0 35 37">
<path d="M17.5 0.5 L33.5 9.5 V27.5 L17.5 36 L1.5 27.5 V9.5 Z" fill="#4a4a4a"/>
<circle cx="17.5" cy="12" r="3.6" fill="#aaa" stroke="#f0f0f0" stroke-width="1.2"/>
<path d="M9.5 26 Q10 18 17.5 18 Q25 18 25.5 26 Z" fill="#aaa" stroke="#f0f0f0" stroke-width="1.2"/>
</svg>
</div>
<div id="panel">
<div id="hdr">
<svg class="a" style="left:20px;top:21px" width="18" height="18" viewBox="0 0 18 18"><path d="M15.5 9 H2.5 M8.5 2.5 L2.3 9 L8.5 15.5" fill="none" stroke="#222" stroke-width="2.1" stroke-linecap="round" stroke-linejoin="round"/></svg>
<div id="title">Chairs</div>
<svg class="a" style="left:340px;top:18px" width="24" height="24" viewBox="0 0 24 24"><circle cx="11" cy="10" r="7.6" fill="none" stroke="#222" stroke-width="1.9"/><path d="M16.5 15.5 L21.5 20" stroke="#222" stroke-width="2.1" stroke-linecap="round"/></svg>
</div>
<div id="track"><svg class="a" style="left:0;top:0" width="15" height="50" viewBox="0 0 15 50"><path d="M7.5 5 L11.5 11.5 H3.5 Z" fill="#b3b3b3" stroke="#b3b3b3" stroke-width="1" stroke-linejoin="round"/><rect x="3" y="18" width="9" height="23" rx="4.5" fill="#b6b6b6"/></svg></div>
<div id="sub">Chairs</div>
<div class="cat" style="left:6px;top:129px">
<svg width="20" height="22" viewBox="0 0 20 22"><ellipse cx="10" cy="4" rx="8" ry="2.3" fill="#e6bf8a"/><path d="M4 5 L3 19 M16 5 L17 19" stroke="#dcdcdc" stroke-width="1.2"/></svg>
<div class="t" style="left:61px;right:auto">Stools &amp; B...</div></div>
<div class="cat" style="left:189px;top:129px">
<svg width="24" height="22" viewBox="0 0 24 22"><path d="M3 8 H21" stroke="#dcae7e" stroke-width="2"/><path d="M4.5 9 V14 M19.5 9 V14" stroke="#d5a271" stroke-width="1.4"/></svg>
<div class="t">Benches</div></div>
<div class="cat" style="left:6px;top:192px">
<svg width="22" height="24" viewBox="0 0 22 24"><path d="M5 21 L9 9 L15 4 L19 5 L17 14 L12 19 Z" fill="#2a2a2a"/><path d="M11 11 L15 8 L16 13 Z" fill="#ddd"/><path d="M6 20 L10 17" stroke="#bbb" stroke-width="1.5"/></svg>
<div class="t" style="left:61px;right:auto">Massage ...</div></div>
<div class="cat" style="left:189px;top:192px">
<svg width="22" height="24" viewBox="0 0 22 24"><rect x="6" y="3" width="10" height="3" fill="#d4a56f"/><path d="M7 6 V21 M15 6 V21" stroke="#d4a56f" stroke-width="1.5"/><rect x="6" y="12" width="10" height="2.5" fill="#e6e6e6" stroke="#ccc" stroke-width="0.5"/></svg>
<div class="t">Dining Cha...</div></div>
<div class="cat" style="left:6px;top:255px">
<svg width="22" height="24" viewBox="0 0 22 24"><rect x="9" y="1" width="5" height="2" rx="1" fill="#555"/><rect x="8" y="4" width="7" height="9" rx="2" fill="#3f3f3f"/><rect x="6" y="12" width="11" height="4" rx="1.5" fill="#8a8a8a"/><path d="M11.5 16 V20 M6 21 L11.5 19 L17 21 M7 23 L11.5 19 L16 23" stroke="#777" stroke-width="1"/></svg>
<div class="t" style="left:61px;right:auto">Office Chai...</div></div>
<div class="cat" style="left:189px;top:255px">
<svg width="24" height="24" viewBox="0 0 24 24"><path d="M5 10 Q12 8.5 19 10 L21 15 Q12 16.5 3 15 Z" fill="#8e8e8e"/></svg>
<div class="t">Seating pa...</div></div>
<div id="sortbar">
<div class="a" style="left:9px;top:14px;font-size:17px;color:#666;letter-spacing:0.25px">total: 723</div>
<div class="a" style="left:92px;top:0;width:1px;height:48px;background:#e6e6e6"></div>
<div class="a" style="left:110px;top:12.5px;font-size:21px;letter-spacing:0.1px;color:#1e1e1e">Newest</div>
<svg class="a" style="left:250px;top:17px" width="18" height="14" viewBox="0 0 18 14"><path d="M2 2.5 L9 11 L16 2.5" fill="none" stroke="#b4b4b4" stroke-width="1.3"/></svg>
<div class="a" style="left:284px;top:0;width:1px;height:48px;background:#e6e6e6"></div>
<svg class="a" style="left:292px;top:14px" width="22" height="20" viewBox="0 0 22 20"><path d="M2 2 H19.5 L13 10 V17.5 L9.5 15.5 V10 Z" fill="none" stroke="#1e1e1e" stroke-width="1.8" stroke-linejoin="round"/></svg>
<div class="a" style="left:315px;top:14px;font-size:17px;letter-spacing:0.4px;color:#555">Brand</div>
</div>
<div class="a" style="left:184px;top:365px;width:1px;height:830px;background:#ebebeb"></div>
<div class="a" style="left:0;top:551px;width:369px;height:1px;background:#ebebeb"></div>
<div class="a" style="left:0;top:737px;width:369px;height:1px;background:#ebebeb"></div>
<div class="a" style="left:0;top:923px;width:369px;height:1px;background:#ebebeb"></div>
<div class="a" style="left:0;top:1109px;width:369px;height:1px;background:#ebebeb"></div>
<svg class="a" style="left:0;top:365px" width="369" height="830" viewBox="72 436 369 830">
<defs>
<radialGradient id="rc1" cx="0.5" cy="0.35" r="0.7"><stop offset="0" stop-color="#b55d45"/><stop offset="1" stop-color="#a24a34"/></radialGradient>
<linearGradient id="sc1" x1="0" y1="0" x2="0" y2="1"><stop offset="0" stop-color="#b0553a"/><stop offset="0.7" stop-color="#a34a30"/><stop offset="1" stop-color="#983f28"/></linearGradient>
<linearGradient id="lg" x1="0" y1="0" x2="1" y2="0"><stop offset="0" stop-color="#000" stop-opacity="0.10"/><stop offset="0.45" stop-color="#000" stop-opacity="0"/><stop offset="1" stop-color="#000" stop-opacity="0.14"/></linearGradient>
<linearGradient id="bk" x1="0" y1="0" x2="0" y2="1"><stop offset="0" stop-color="#fff" stop-opacity="0.10"/><stop offset="0.6" stop-color="#fff" stop-opacity="0"/><stop offset="1" stop-color="#000" stop-opacity="0.10"/></linearGradient>
<linearGradient id="c8b" x1="0" y1="0" x2="1" y2="0"><stop offset="0" stop-color="#3f2b20"/><stop offset="0.35" stop-color="#563d2f"/><stop offset="0.7" stop-color="#4c3428"/><stop offset="1" stop-color="#3a281d"/></linearGradient>
<radialGradient id="c7b" cx="0.5" cy="0.4" r="0.6"><stop offset="0" stop-color="#a0978a"/><stop offset="1" stop-color="#8f867a"/></radialGradient>
</defs>
<!-- chair 1 -->
<g fill="#c9a064">
<rect x="127" y="453" width="5.5" height="66" rx="2"/><rect x="196.5" y="453" width="5.5" height="66" rx="2"/>
<rect x="131" y="459" width="67" height="6"/><rect x="131" y="509" width="67" height="7"/>
<rect x="133" y="548" width="5" height="28" rx="1.5"/><rect x="190" y="548" width="5" height="28" rx="1.5"/>
<rect x="122" y="557.5" width="86" height="5"/>
<path d="M121 600 L134 567 L137 569 L124 603 Z"/><path d="M208 600 L195 567 L192 569 L205 603 Z"/>
<path d="M117.5 541 Q121 538 124.5 541 L125 612 Q121 614 118 612 Z"/><path d="M204.5 541 Q208 538 211.5 541 L211 612 Q208 614 205 612 Z"/>
</g>
<path d="M136 463 Q136 458 141 458 L187 458 Q192.5 458 192.5 463 L190 510 Q190 515 185 515 L143 515 Q138 515 138 510 Z" fill="url(#rc1)"/>
<path d="M128 518 L198 518 L206 549 Q206 553 202 553 L127 553 Q123 553 123 549 Z" fill="url(#sc1)"/>
<!-- chair 2 -->
<g fill="#e6d0b2">
<path d="M314 453 Q348 457 382 453 L382.5 476 Q348 485 314 476 Z"/>
<rect x="317" y="474" width="4.8" height="48"/><rect x="376" y="474" width="4.8" height="48"/>
<path d="M318 497 Q349 494 380 497 L388.5 512 Q349 509 309.5 512 Z"/>
<path d="M309.5 512 Q349 509 388.5 512 L388 516 Q349 513 310 516 Z" fill="#ddc6a6"/>
<rect x="313" y="515" width="70" height="10" fill="#e2caa9"/>
<path d="M313.5 515 H320.5 L322 609 Q320 611 318 609 Z"/><path d="M377.5 515 H384.5 L382 609 Q380 611 378 609 Z"/>
<rect x="320" y="546" width="58" height="5"/><rect x="320" y="570" width="58" height="6.5"/>
</g>
<path d="M314 474 Q348 483 382.5 474 L382.5 476 Q348 485 314 476 Z" fill="#d3b891"/>
<path d="M313 515 H383 V518 H313 Z" fill="#d2b995"/>
<path d="M314 453 Q348 457 382 453 L382.5 476 Q348 485 314 476 Z" fill="url(#bk)"/>
<!-- chair 3 -->
<g fill="#dcbf98">
<rect x="124" y="668" width="5.5" height="95" rx="1.5" fill="#cdae86"/><rect x="199" y="668" width="5.5" height="95" rx="1.5" fill="#cdae86"/>
<rect x="128" y="716.5" width="72" height="6.5" fill="#d3b68e"/>
<rect x="121" y="656" width="88" height="14" fill="#d6b88f"/>
<path d="M117.5 656 H124.5 L125 797 Q123 799 121 797 Z"/><path d="M205 656 H212 L209.5 797 Q207.5 799 205.5 797 Z"/>
<rect x="124" y="741.5" width="81" height="7.5"/>
<path d="M117 639 Q164 643 212 639 Q215 639 215 643 L214 655 Q214 658 211 658 Q164 661 118 658 Q114.5 658 114.5 655 L114 643 Q114 639 117 639 Z" fill="#dbbe96"/>
</g>
<path d="M114.5 655 Q164 659 214 655 L214 657 Q214 658 211 658 Q164 661 118 658 Q114.5 658 114.5 657 Z" fill="#c8a67b"/>
<path d="M117 639 Q164 643 212 639 Q215 639 215 643 L214 655 Q164 659 114.5 655 L114 643 Q114 639 117 639 Z" fill="url(#bk)"/>
<!-- chair 4 -->
<g fill="#d5ad7f">
<path d="M314 639 Q349 643 382 639 L382.5 661 Q349 671 314 661 Z"/>
<rect x="317" y="660" width="4.8" height="44"/><rect x="376" y="660" width="4.8" height="44"/>
<rect x="313" y="701" width="71" height="11" fill="#d2a97a"/>
<path d="M313.5 701 H320.5 L322 796 Q320 798 318 796 Z"/><path d="M377.5 701 H384.5 L382 796 Q380 798 378 796 Z"/>
<rect x="320" y="731.5" width="58" height="5.5"/><rect x="320" y="757" width="58" height="6.5"/>
</g>
<path d="M318 682 Q349 679 380 682 L386 698 Q387 703 381 703 Q349 708 317 703 Q311 703 312 698 Z" fill="#3d3126"/>
<path d="M314 659 Q349 669 382.5 659 L382.5 661 Q349 671 314 661 Z" fill="#c49a69"/>
<path d="M314 639 Q349 643 382 639 L382.5 661 Q349 671 314 661 Z" fill="url(#bk)"/>
<path d="M318 682 Q349 679 380 682 L382 688 Q349 685 316 688 Z" fill="#4a3d31"/>
<!-- chair 5 -->
<g fill="#e6cfb0">
<path d="M123.5 826 Q164 830 204.3 826 L204.5 861 Q164 869 123.5 861 Z"/>
<rect x="127.2" y="858" width="4.5" height="34"/><rect x="196" y="858" width="4.5" height="34"/>
<rect x="128" y="918" width="4" height="29"/><rect x="196" y="918" width="4" height="29"/>
<path d="M130 884 Q164 881 197 884 L207.3 903 Q164 899 121.2 903 Z"/>
<path d="M121.2 903 Q164 899 207.3 903 L207 910 Q164 906 121.5 910 Z" fill="#e0c7a6"/>
<rect x="124" y="907" width="81" height="12.5" fill="#e2cbaa"/>
<path d="M121.5 907 H128.7 L127 984 Q125 986 123 984 Z"/><path d="M199.8 907 H206.7 L205 984 Q203 986 201 984 Z"/>
</g>
<path d="M123.5 859 Q164 867 204.5 859 L204.5 861 Q164 869 123.5 861 Z" fill="#d6bb94"/>
<path d="M123.5 826 Q164 830 204.3 826 L204.5 861 Q164 869 123.5 861 Z" fill="url(#bk)"/>
<!-- chair 6 -->
<g fill="#c8925b">
<path d="M305.7 825 Q349 830 392.6 825 L392.6 851 Q349 864 305.7 851 Z"/>
<rect x="309.5" y="849" width="5.3" height="100"/><rect x="384" y="849" width="5" height="100"/>
<path d="M314 855 L295 869 Q293.5 871 294 874 L298.5 874 L314 862 Z"/><path d="M385 855 L404 869 Q405.5 871 405 874 L400.5 874 L385 862 Z"/>
<path d="M294 872 H299.5 L298.5 985 Q296.5 987 295 985 Z"/><path d="M399.5 872 H405 L404 985 Q402 987 400.5 985 Z"/>
<rect x="298" y="909" width="103" height="12" fill="#c38b54"/>
</g>
<path d="M318 883 Q349 880 380.5 883 Q385 883 388 887 L395.5 902 Q397 911 388 911.5 Q349 915 310 911.5 Q301 911 302.5 902 L310 887 Q313 883 318 883 Z" fill="#a5a3a1"/>
<path d="M305.7 825 Q349 830 392.6 825 L392.6 851 Q349 864 305.7 851 Z" fill="url(#bk)"/>
<path d="M305.7 840 Q349 846 392.6 840 L392.6 843 Q349 849 305.7 843 Z" fill="#b97f47" opacity="0.3"/>
<!-- chair 7 -->
<g fill="#9f4f24">
<rect x="137" y="1046" width="5.2" height="85" rx="1.5"/><rect x="185.3" y="1046" width="5.3" height="85" rx="1.5"/>
<path d="M128 1029 Q108 1033 101 1055 Q101 1058 104 1058 L110 1058 Q114 1043 128 1039 Z"/><path d="M200 1029 Q220 1033 227 1055 Q227 1058 224 1058 L218 1058 Q214 1043 200 1039 Z"/>
<path d="M101.5 1055 H110.5 L114.2 1169 Q112 1171 109.7 1169 Z"/><path d="M217.5 1055 H226.5 L218.5 1169 Q216.5 1171 214.5 1169 Z"/>
<rect x="110" y="1096" width="108" height="10.5"/>
<ellipse cx="164" cy="1090" rx="42" ry="8"/>
</g>
<ellipse cx="164.1" cy="1032.5" rx="37.8" ry="21.5" fill="url(#c7b)"/>
<ellipse cx="164" cy="1082" rx="47.5" ry="13.2" fill="#9a9184"/>
<!-- chair 8 -->
<g fill="#2c2317">
<rect x="322.6" y="1100" width="5.4" height="31" rx="1.5"/><rect x="370" y="1100" width="5.2" height="31" rx="1.5"/>
<path d="M312 1022 Q291 1027 285 1048 Q285 1052 288 1052 L296 1052 Q301 1036 312 1033 Z"/><path d="M386 1022 Q407 1027 413 1048 Q413 1052 410 1052 L402 1052 Q397 1036 386 1033 Z"/>
<path d="M285.6 1050 H296 L300 1169 Q297.5 1171 294.7 1169 Z"/><path d="M402 1050 H412.6 L404 1169 Q401.5 1171 399 1169 Z"/>
<rect x="296" y="1091.5" width="106" height="12"/>
</g>
<path d="M311.3 1066 V1030 Q312 1010 349 1010 Q386 1010 386.9 1030 V1066 Q386.9 1072 380 1072 H318 Q311.3 1072 311.3 1066 Z" fill="url(#c8b)"/>
<ellipse cx="349" cy="1084.5" rx="46" ry="12.8" fill="#4a3325"/>
</svg>
</div>
<div class="a" style="left:456px;top:71px;width:26px;height:1120px;background:linear-gradient(90deg,rgba(0,0,0,0.065),rgba(0,0,0,0.03) 40%,rgba(0,0,0,0))"></div>
<div id="tab"><svg class="a" style="left:0;top:0" width="30" height="72" viewBox="0 0 30 72"><path d="M9.5 36 L19.5 29.5 V42.5 Z" fill="#363b42" stroke="#363b42" stroke-width="1" stroke-linejoin="round"/></svg></div>
</body></html>
